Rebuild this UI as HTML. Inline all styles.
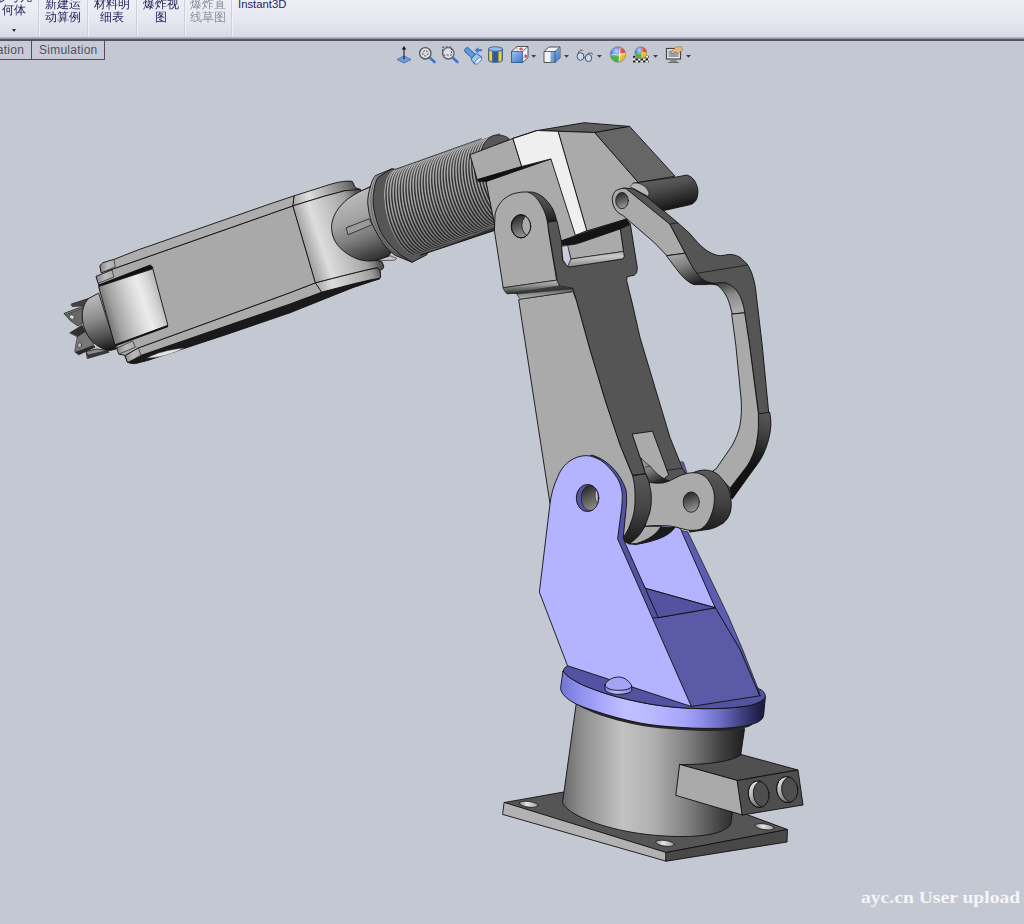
<!DOCTYPE html>
<html><head><meta charset="utf-8">
<style>
html,body{margin:0;padding:0;}
body{width:1024px;height:924px;overflow:hidden;background:#c4c8d3;position:relative;font-family:"Liberation Sans","WenQuanYi Zen Hei","Noto Sans CJK SC",sans-serif;}
#tb{position:absolute;left:0;top:0;width:1024px;height:38px;background:linear-gradient(#eeeff6 0,#e6e7f0 20px,#d9dbe6 36px,#c9cbd6 38px);}
#tbl{position:absolute;left:0;top:37px;width:1024px;height:4px;background:linear-gradient(#c0c2cf 0,#9c9eae 35%,#55576a 62%,#484a5a 85%,#7c7e8e 100%);}
.sep{position:absolute;top:0;width:1px;height:36px;background:#cdcfda;box-shadow:1px 0 0 #f0f1f7;}
.bt{position:absolute;font-size:12px;line-height:13px;color:#25255a;text-align:center;white-space:nowrap;}
.tab{position:absolute;top:41px;height:18.5px;letter-spacing:0.25px;border:1px solid #4e5060;border-top:none;background:#c8cbd7;color:#50525c;font-size:12px;line-height:18.5px;box-sizing:border-box;white-space:nowrap;overflow:hidden;}
#wm{position:absolute;left:860.5px;top:888.5px;font-family:"Liberation Serif",serif;font-weight:bold;font-size:16px;transform-origin:0 0;transform:scaleX(1.225);color:#f4f5f8;white-space:nowrap;line-height:18px;}
svg{position:absolute;left:0;top:0;}
</style></head><body>
<div id="tb"></div><div id="tbl"></div>
<div class="sep" style="left:38px"></div><div class="sep" style="left:87px"></div><div class="sep" style="left:136px"></div><div class="sep" style="left:184px"></div><div class="sep" style="left:231px"></div>
<div class="bt" style="left:-10px;top:-9px;width:48px">参考几<br>何体</div>
<div class="bt" style="left:39px;top:-2px;width:48px">新建运<br>动算例</div>
<div class="bt" style="left:88px;top:-2px;width:48px">材料明<br>细表</div>
<div class="bt" style="left:137px;top:-2px;width:48px">爆炸视<br>图</div>
<div class="bt" style="left:184px;top:-2px;width:48px;color:#8e9099">爆炸直<br>线草图</div>
<div class="bt" style="left:238px;top:-2.5px;font-size:11.3px">Instant3D</div>
<div style="position:absolute;left:12px;top:29px;width:0;height:0;border-left:2.5px solid transparent;border-right:2.5px solid transparent;border-top:3px solid #25255a"></div>
<div class="tab" style="left:-20px;width:52px;padding-left:6px">ulation</div>
<div class="tab" style="left:31px;width:74px;padding-left:7px">Simulation</div>
<svg id="robot" width="1024" height="924" viewBox="0 0 1024 924">
<defs>
<linearGradient id="gcyl" gradientUnits="userSpaceOnUse" x1="562" y1="0" x2="745" y2="0">
<stop offset="0" stop-color="#666"/><stop offset="0.1" stop-color="#8c8c8c"/><stop offset="0.33" stop-color="#c2c2c2"/><stop offset="0.5" stop-color="#b0b0b0"/><stop offset="0.7" stop-color="#7c7c7c"/><stop offset="0.86" stop-color="#444"/><stop offset="1" stop-color="#1c1c1c"/>
</linearGradient>
<linearGradient id="gflange" gradientUnits="userSpaceOnUse" x1="560" y1="0" x2="766" y2="0">
<stop offset="0" stop-color="#7272d4"/><stop offset="0.1" stop-color="#9090f0"/><stop offset="0.2" stop-color="#a8a8fc"/><stop offset="0.32" stop-color="#c0c0ff"/><stop offset="0.45" stop-color="#b8b8ff"/><stop offset="0.6" stop-color="#a6a6fa"/><stop offset="0.68" stop-color="#9090ec"/><stop offset="0.79" stop-color="#6868be"/><stop offset="0.88" stop-color="#404082"/><stop offset="0.97" stop-color="#1e1e48"/><stop offset="1" stop-color="#1a1a40"/>
</linearGradient>
<linearGradient id="ghole" x1="0.2" y1="0" x2="0.6" y2="1"><stop offset="0" stop-color="#222"/><stop offset="0.45" stop-color="#555"/><stop offset="1" stop-color="#8c8c8c"/></linearGradient>
<linearGradient id="gflange2" x1="0" y1="0" x2="1" y2="0"><stop offset="0" stop-color="#7a7ad8"/><stop offset="0.4" stop-color="#c2c2ff"/><stop offset="1" stop-color="#8080dd"/></linearGradient>
<linearGradient id="gph" x1="0" y1="0" x2="1" y2="0"><stop offset="0" stop-color="#8a8a8a"/><stop offset="0.4" stop-color="#e4e4e4"/><stop offset="1" stop-color="#a0a0a0"/></linearGradient>
<linearGradient id="gcres" x1="0" y1="0" x2="0" y2="1"><stop offset="0" stop-color="#e0e0e0"/><stop offset="0.5" stop-color="#b8b8b8"/><stop offset="1" stop-color="#6a6a6a"/></linearGradient>
<clipPath id="cbh1"><ellipse cx="758.6" cy="794.2" rx="10.3" ry="13.4" transform="rotate(-8 758.6 794.2)"/></clipPath>
<clipPath id="cbh2"><ellipse cx="787.2" cy="789.6" rx="10.6" ry="13.1" transform="rotate(-8 787.2 789.6)"/></clipPath>
</defs>
<g stroke="#111" stroke-width="0.9" stroke-linejoin="round" stroke-linecap="round">
<!-- base plate -->
<polygon points="504.5,802.5 575,790 740,812 787.5,829.5 666.2,852.5" fill="#555"/>
<polygon points="504.5,802.5 666.2,852.5 666.2,861.2 503,814.5" fill="#b2b2b2"/>
<polygon points="666.2,852.5 787.5,829.5 787,842 666.2,861.2" fill="#484848"/>
<!-- holes -->
<g stroke-width="0.7"><ellipse cx="528.7" cy="804.3" rx="9.5" ry="2.8" fill="url(#gph)" transform="rotate(8 528.7 804.3)"/><ellipse cx="665" cy="843.3" rx="9.5" ry="2.8" fill="url(#gph)" transform="rotate(8 665 843.3)"/><ellipse cx="764.6" cy="826.8" rx="9.8" ry="2.8" fill="url(#gph)" transform="rotate(9 764.6 826.8)"/></g>
<!-- cylinder -->
<path d="M576.3,703 L562.5,802.5 C566,812 590,824 625,831 C660,838 700,838 716,833 C726,830 731,826 731,822 L744.5,729 Z" fill="url(#gcyl)"/>
<!-- connector box -->
<path d="M680,764.5 L737.5,780.5 L798,770 L741.2,754.5 C735,760 712,765 680,764.5 Z" fill="#505050"/>
<polygon points="680,764.5 737.5,780.5 742.5,815 676.2,795.5" fill="#aaa"/>
<polygon points="737.5,780.5 798,770 803,805 742.5,815" fill="#4e4e4e"/>
<ellipse cx="758.6" cy="794.2" rx="10.3" ry="13.4" transform="rotate(-8 758.6 794.2)" fill="url(#gcres)" stroke-width="0.8"/>
<g clip-path="url(#cbh1)"><ellipse cx="763.6" cy="794" rx="10.3" ry="13.4" transform="rotate(-8 763.6 794)" fill="#4e4e4e" stroke-width="0.8"/></g>
<ellipse cx="787.2" cy="789.6" rx="10.6" ry="13.1" transform="rotate(-8 787.2 789.6)" fill="url(#gcres)" stroke-width="0.8"/>
<g clip-path="url(#cbh2)"><ellipse cx="792.2" cy="789.4" rx="10.6" ry="13.1" transform="rotate(-8 792.2 789.4)" fill="#4e4e4e" stroke-width="0.8"/></g>
<ellipse cx="758.6" cy="794.2" rx="10.3" ry="13.4" transform="rotate(-8 758.6 794.2)" fill="none" stroke-width="0.8"/>
<ellipse cx="787.2" cy="789.6" rx="10.6" ry="13.1" transform="rotate(-8 787.2 789.6)" fill="none" stroke-width="0.8"/>
</g>

<g stroke="#111" stroke-width="0.9" stroke-linejoin="round" stroke-linecap="round">
<!-- dark ring under flange -->
<path d="M570,700 C585,712 615,721 642.8,726 C665,729.5 691,731 716.5,731 C735,730.5 748,728 752,725 L752,718 L570,692 Z" fill="#262626" stroke="none"/>
<!-- flange rim -->
<path d="M563.2,671.3 C566,675 569.5,677.8 573.8,680.1 C579,683.5 585,686.3 592.6,688.9 C600,691.8 608,694.5 617.7,697 C626,699.2 634,701 642.8,702.7 C651,704.3 659,705.5 667.9,706.5 C676,707.5 683,708 691.4,708.3 C702,708.8 712,708.8 722.7,708.3 C732,707.8 740,707 747.8,705.8 C753,704.8 757,703.3 760.4,701.4 C763,700 764.5,698.5 765.4,697 L764.1,710.2 C764,713 763.7,715.5 762.9,717.8 C761.5,719.6 760,721 757.9,722.1 C753,724.3 748,725.6 741.6,726.5 C733,727.8 725,728.3 716.5,728.4 C708,728.5 700,728.4 691.4,728 C682,727.5 674,727 665,726.3 C657,725.5 650,724.7 642.8,723.5 C634,722 626,720 617.7,717.8 C609,715.5 601,713 592.6,710.2 C587,708.3 581,706.3 576.3,704 C571,701.5 567,698.5 563.8,695.2 C562,693 561,691 560.6,688.9 Z" fill="url(#gflange)"/>
<!-- flange top -->
<path d="M563.2,671.3 C563.5,669 565,667 567.5,665.7 L700,640 L759.1,688.9 C762,690 763.5,691.3 764.1,692.7 C765,694 765.5,695.5 765.4,697 C764.5,698.5 763,700 760.4,701.4 C757,703.3 753,704.8 747.8,705.8 C740,707 732,707.8 722.7,708.3 C712,708.8 702,708.8 691.4,708.3 C683,708 676,707.5 667.9,706.5 C659,705.5 651,704.3 642.8,702.7 C634,701 626,699.2 617.7,697 C608,694.5 600,691.8 592.6,688.9 C585,686.3 579,683.5 573.8,680.1 C569.5,677.8 566,675 563.2,671.3 Z" fill="#5353a2"/>
<!-- far plate interior -->
<polygon points="618,538 640,480 681.6,530.7 715.4,607.8 645.8,588.4" fill="#b3b3ff"/>
<!-- far plate edge strip -->
<polygon points="681.6,530.7 687.8,531.9 728,615.4 742.8,650 757.9,688.3 760.5,696 759.7,695.8 740.3,650 715.4,607.8" fill="#5c5cb0" stroke-width="0.7"/>
<!-- right face -->
<polygon points="640,590 658.3,617.6 715.4,607.8 740.3,650 759.7,695.8 691.4,706.5 650,630" fill="#5a5aa6"/>
<!-- triangular pocket -->
<polygon points="645.8,588.4 715.4,607.8 658.3,617.6" fill="#5353a2"/>
</g>

<defs>
<linearGradient id="gwrist" gradientUnits="userSpaceOnUse" x1="98.9" y1="286.4" x2="152.8" y2="268.8">
<stop offset="0" stop-color="#7e7e7e"/><stop offset="0.12" stop-color="#a0a0a0"/><stop offset="0.35" stop-color="#c4c4c4"/><stop offset="0.52" stop-color="#dcdcdc"/><stop offset="0.67" stop-color="#ececec"/><stop offset="0.85" stop-color="#d4d4d4"/><stop offset="1" stop-color="#b4b4b4"/>
</linearGradient>
<linearGradient id="gboss" gradientUnits="userSpaceOnUse" x1="293" y1="206" x2="372" y2="180">
<stop offset="0" stop-color="#a6a6a6"/><stop offset="0.18" stop-color="#dedede"/><stop offset="0.35" stop-color="#c8c8c8"/><stop offset="0.52" stop-color="#b2b2b2"/><stop offset="0.62" stop-color="#a2a2a2"/><stop offset="0.7" stop-color="#808080"/><stop offset="0.77" stop-color="#555"/><stop offset="0.86" stop-color="#444"/><stop offset="1" stop-color="#333"/>
</linearGradient>
<linearGradient id="gbossb" gradientUnits="userSpaceOnUse" x1="316" y1="284" x2="395" y2="258">
<stop offset="0" stop-color="#a6a6a6"/><stop offset="0.18" stop-color="#dedede"/><stop offset="0.35" stop-color="#c8c8c8"/><stop offset="0.55" stop-color="#b2b2b2"/><stop offset="0.68" stop-color="#9a9a9a"/><stop offset="0.76" stop-color="#6a6a6a"/><stop offset="0.83" stop-color="#333"/><stop offset="1" stop-color="#222"/>
</linearGradient>
<linearGradient id="gneck" gradientUnits="userSpaceOnUse" x1="345" y1="195" x2="372" y2="262">
<stop offset="0" stop-color="#bcbcbc"/><stop offset="0.35" stop-color="#a4a4a4"/><stop offset="0.65" stop-color="#787878"/><stop offset="1" stop-color="#2e2e2e"/>
</linearGradient>
<linearGradient id="gcone" gradientUnits="userSpaceOnUse" x1="90" y1="298" x2="105" y2="350">
<stop offset="0" stop-color="#b8b8b8"/><stop offset="0.4" stop-color="#8c8c8c"/><stop offset="0.75" stop-color="#505050"/><stop offset="1" stop-color="#1c1c1c"/>
</linearGradient>
<linearGradient id="gbosst" gradientUnits="userSpaceOnUse" x1="293" y1="206" x2="372" y2="180">
<stop offset="0" stop-color="#a6a6a6"/><stop offset="0.22" stop-color="#e0e0e0"/><stop offset="0.45" stop-color="#aaa"/><stop offset="0.68" stop-color="#777"/><stop offset="0.78" stop-color="#555"/><stop offset="1" stop-color="#444"/>
</linearGradient>
<linearGradient id="gcap" x1="0" y1="0" x2="1" y2="0"><stop offset="0" stop-color="#888"/><stop offset="0.5" stop-color="#bbb"/><stop offset="1" stop-color="#aaa"/></linearGradient>
</defs>
<g stroke="#111" stroke-width="0.9" stroke-linejoin="round" stroke-linecap="round">
<!-- gripper bits -->
<polygon points="71.3,304 88.9,298.3 90,300.8 85,305.8 72.5,306.5" fill="#444" stroke-width="0.6"/>
<polygon points="64.4,313.4 82.6,306.5 83.8,309 82,324 77.6,325.9 70,320.3" fill="#686868" stroke-width="0.6"/>
<polygon points="64.4,313.4 82.6,306.5 83.2,308 65.6,314.7" fill="#8c8c8c" stroke-width="0.5"/>
<ellipse cx="71.9" cy="317.1" rx="2.6" ry="2" fill="#ddd" stroke-width="0.5" transform="rotate(30 71.9 317.1)"/>
<polygon points="70,332.8 82,325.3 85.1,331.5 77.6,336.6" fill="#303030" stroke-width="0.6"/>
<polygon points="77.6,336.6 85.1,331.5 93.9,344.1 78.8,354.1 75,351.6" fill="#777" stroke-width="0.6"/>
<ellipse cx="79.6" cy="345.2" rx="2" ry="2.4" fill="#bbb" stroke-width="0.5"/>
<polygon points="75.7,352.3 93.9,345.4 95,347.2 79,354.8" fill="#2a2a2a" stroke-width="0.5"/>
<polygon points="86.3,351.6 96.4,349.1 107.7,350.4 109,352.3 87.6,358.5" fill="#3a3a3a" stroke-width="0.6"/>
<polygon points="86.3,351.6 96.4,349.1 107.7,350.4 88,355" fill="#8a8a8a" stroke-width="0.5"/>
<!-- cone -->
<path d="M98.3,293.3 L88.9,298.3 C86,301 84.5,304 83.8,306.5 C82,311 82,316 82.6,320.3 C83,325 84.5,329 86.3,332.8 C88,336.5 91,340 93.9,342.8 C96,345 99,347 101.4,347.9 C104,349.5 107,350.3 110.2,350.4 L116,349 Z" fill="url(#gcone)"/>
<!-- bottom black face -->
<path d="M127.8,362.3 C130,363.5 133,363.8 135.3,363.6 L147.8,360.4 L225,335 L290,312.8 L327.6,297.7 L352.7,287.7 L371.5,281.4 L379.7,278.9 L379.7,270 L317.5,283.7 L140.9,355.4 L125.2,355.4 Z" fill="#1a1a1a"/>
<path d="M147.5,358 C152,354.5 170,349 183.5,348.2 C175,353 158,358 147.5,358 Z" fill="#e4e4e4" stroke="#555" stroke-width="0.4"/>
<!-- bottom plate side strip -->
<path d="M125.2,355.4 L127.8,362.3 L140.9,355.4 L290,304 L322,292.1 L352.7,284 L371.5,279.6 L379.7,278.3 L380.6,276.4 L379.7,270.4 L382.8,266.4 L377.8,267.6 L365.3,270.2 L340.2,276.4 L315.7,282.7 L290,292.7 L140.3,347.2 L138.4,347.9 Z" fill="#ababab"/>
<path d="M315.7,282.7 L340.2,276.4 L365.3,270.2 L377.8,267.6 L379.7,270.4 L380.6,276.4 L379.7,278.3 L371.5,279.6 L352.7,284 L322,292.1 Z" fill="url(#gbossb)"/>
<path d="M125.2,355.4 L138.4,347.9 L140.9,355.4 L127.8,362.3 Z" fill="url(#gcap)" stroke-width="0.6"/>
<!-- main front face -->
<path d="M96.4,276.3 L112,270 L113.7,268.7 L293.2,205.8 L315.7,282.7 L290,292.7 L140.3,347.2 L138.4,347.9 L125.2,355.4 L119,354.1 L117.1,347.9 L98.3,283.2 Z" fill="#a9a9a9"/>
<!-- top plate side -->
<path d="M100.2,265.7 C101,264 102.5,263 103.9,262.5 L114,259.4 L137.8,250 L270,203.9 L294.5,195.7 L293.2,205.8 L270,213.9 L113.7,268.7 L101.6,272.6 Z" fill="#adadad"/>
<path d="M100.2,265.7 C101,264 102.5,263 103.9,262.5 L114,259.4 L115.2,267 L101.6,272.6 Z" fill="url(#gcap)" stroke-width="0.6"/>
<path d="M96.4,276.3 L112,270 L113.9,277 L98.3,283.2 Z" fill="url(#gcap)" stroke-width="0.6"/>
<path d="M117.1,347.9 L132.8,341 L135.3,347.2 L119,354.1 Z" fill="url(#gcap)" stroke-width="0.6"/>
<!-- boss top rim -->
<path d="M294.5,195.7 L320.2,187.6 C328,185 334,183 340.3,181.9 C345,181 349,181 352.2,181.3 L355.3,187.6 L360.3,189.4 L362.2,192.6 L345.3,190.7 L324,196.3 L293.2,205.8 Z" fill="url(#gbosst)"/>
<!-- boss body -->
<path d="M293.2,205.8 L324,196.3 L345.3,190.7 L360.3,189.4 L362.2,192.6 L377.8,260.7 L382.2,262 L383.8,266.4 L382.8,268.9 L379.7,270.4 L377.8,267.6 L365.3,270.2 L340.2,276.4 L315.7,282.7 Z" fill="url(#gboss)"/>
<!-- wrist roller -->
<path d="M98.5,284.6 L150.3,264.4 L153.6,267.8 L152.8,268.8 L98.9,286.4 Z" fill="#111" stroke="none"/>
<path d="M98.9,286.4 L152.8,268.8 L167.9,325.3 L115.2,344.7 Z" fill="url(#gwrist)"/>
<path d="M115.2,344.7 L167.9,325.3 L168.2,326.9 L115.7,346.2 Z" fill="#111" stroke="none"/>
<!-- light slivers behind neck -->
<polygon points="361.6,190.7 370.4,186.3 369.5,191.5" fill="#c8c8c8" stroke-width="0.6"/>
<polygon points="376,260.5 390.2,255.8 396.5,258.3 395.2,259.9" fill="#c4c4c4" stroke-width="0.6"/>
<!-- neck -->
<path d="M370.4,187 L361.6,190.7 C356,193.5 352,196 347.8,198.9 C343,203 339,207 336.5,211.4 C333.5,216 332,221 331.5,226.5 C331.5,231 332.5,235 334,239 C336,243.5 339,247 342.8,250.3 C347,254 352,257 357.8,259.1 C362,260.5 366,261 370.4,261 C373,260.8 375.5,260.5 378.9,259.5 L389,255.8 L392,250 L380,225 L374,190 Z" fill="url(#gneck)"/>
<polygon points="346.5,227.7 369.1,218.9 372.3,224.6 348.4,234.6" fill="#9a9a9a" stroke-width="0.7"/>
</g>

<defs>
<clipPath id="cthread"><path d="M394.7,169.6 L393.2,170.3 L391.8,171.2 L390.5,172.4 L389.3,173.8 L388.2,175.5 L387.2,177.4 L386.4,179.6 L385.6,181.9 L385.1,184.4 L384.6,187.1 L384.3,189.9 L384.1,192.9 L384.0,196.0 L384.2,199.2 L384.4,202.5 L384.8,205.9 L385.3,209.2 L386.0,212.7 L386.7,216.1 L387.6,219.5 L388.7,222.8 L389.8,226.1 L391.1,229.3 L392.4,232.4 L393.8,235.3 L395.4,238.2 L397.0,240.8 L398.6,243.3 L400.3,245.6 L402.1,247.8 L403.8,249.6 L405.6,251.3 L407.4,252.7 L409.2,253.9 L411.0,254.8 L412.8,255.4 L414.5,255.8 L416.2,256.0 L417.8,255.8 L419.4,255.4 L500,228.6 L500,133.3 Z"/></clipPath>
<linearGradient id="gthr" gradientUnits="userSpaceOnUse" x1="430" y1="160" x2="458" y2="245"><stop offset="0" stop-color="#fff" stop-opacity="0.14"/><stop offset="0.3" stop-color="#fff" stop-opacity="0"/><stop offset="0.45" stop-color="#000" stop-opacity="0.03"/><stop offset="0.8" stop-color="#000" stop-opacity="0.26"/><stop offset="1" stop-color="#000" stop-opacity="0.4"/></linearGradient>
<linearGradient id="gpin" gradientUnits="userSpaceOnUse" x1="660" y1="178" x2="668" y2="210"><stop offset="0" stop-color="#606060"/><stop offset="0.35" stop-color="#4c4c4c"/><stop offset="0.7" stop-color="#2e2e2e"/><stop offset="1" stop-color="#151515"/></linearGradient>
<linearGradient id="gcollar" gradientUnits="userSpaceOnUse" x1="380" y1="170" x2="395" y2="260"><stop offset="0" stop-color="#b0b0b0"/><stop offset="0.5" stop-color="#8e8e8e"/><stop offset="1" stop-color="#606060"/></linearGradient>
</defs>
<g stroke="#111" stroke-width="0.9" stroke-linejoin="round" stroke-linecap="round">
<path d="M391.5,169 L375.2,175.7 C372,180 371,184 370.2,187.6 C368.5,193 367.7,198 367.7,202.7 C368,207 368.7,211 369.6,215.2 C370.7,220 372,224 374,227.8 C376.5,233 379.5,238 382.7,242.8 C386,247.5 390,252 395.3,255.4 L412,262.2 L413,261 C400,254 390,243 384,230 C378,217 375,200 378,187 C380,180 386,173 394,169.5 Z" fill="url(#gcollar)"/>
<path d="M395.3,169.4 L391.5,169 L377.7,177.6 C375.5,182 374.5,186 374,190 C373,195 373,200 373.3,205.2 C373.8,210 375,215 376.5,220.2 C378,225.5 380,230.5 382.7,235.3 C386,240.5 389.5,245 394,249 C397.5,252.5 401,255.5 405.3,257.9 L412.2,262.3 L427,254.6 L430,240 L410,170 Z" fill="#565656"/>
<path d="M389.5,170 L376.5,176.6 C373,183 371.5,190 371,196 C370.5,206 372,216 375.5,225 C379,234 385,244 392,251 L406,259.5" fill="none" stroke-width="0.5" stroke="#333"/>
<rect x="370" y="120" width="140" height="150" fill="#484848" stroke="none" clip-path="url(#cthread)"/>
<g clip-path="url(#cthread)" fill="none">
<path d="M392.4,170.3 L390.9,171.0 L389.5,172.0 L388.2,173.2 L387.0,174.6 L385.9,176.3 L384.9,178.2 L384.1,180.3 L383.4,182.6 L382.8,185.2 L382.3,187.9 L382.0,190.7 L381.8,193.7 L381.8,196.8 L381.9,200.0 L382.1,203.3 L382.5,206.7 L383.0,210.0 L383.7,213.5 L384.4,216.9 L385.4,220.3 L386.4,223.6 L387.5,226.9 L388.8,230.1 L390.1,233.2 L391.6,236.2 L393.1,239.0 L394.7,241.7 L396.3,244.2 L398.0,246.5 L399.8,248.6 L401.6,250.5 L403.4,252.2 L405.2,253.6 L407.0,254.8 L408.8,255.7 L410.5,256.3 L412.3,256.7 L414.0,256.8 L415.6,256.7 L417.1,256.3" stroke="#a6a6a6" stroke-width="1.45"/>
<path d="M393.8,169.9 L392.3,170.5 L390.9,171.5 L389.6,172.7 L388.4,174.1 L387.3,175.8 L386.3,177.7 L385.4,179.8 L384.7,182.2 L384.1,184.7 L383.7,187.4 L383.3,190.2 L383.2,193.2 L383.1,196.3 L383.2,199.5 L383.5,202.8 L383.8,206.2 L384.4,209.6 L385.0,213.0 L385.8,216.4 L386.7,219.8 L387.8,223.1 L388.9,226.4 L390.1,229.6 L391.5,232.7 L392.9,235.7 L394.5,238.5 L396.0,241.2 L397.7,243.7 L399.4,246.0 L401.2,248.1 L402.9,250.0 L404.7,251.7 L406.5,253.1 L408.3,254.3 L410.1,255.2 L411.9,255.8 L413.6,256.2 L415.3,256.3 L416.9,256.2 L418.5,255.8" stroke="#161616" stroke-width="0.55"/>
<path d="M395.2,169.4 L393.8,170.1 L392.4,171.0 L391.1,172.2 L389.9,173.6 L388.8,175.3 L387.8,177.2 L386.9,179.4 L386.2,181.7 L385.6,184.2 L385.2,186.9 L384.8,189.7 L384.7,192.7 L384.6,195.8 L384.7,199.0 L385.0,202.3 L385.3,205.7 L385.9,209.0 L386.5,212.5 L387.3,215.9 L388.2,219.2 L389.2,222.6 L390.4,225.9 L391.6,229.1 L393.0,232.2 L394.4,235.1 L395.9,238.0 L397.5,240.6 L399.2,243.1 L400.9,245.4 L402.6,247.5 L404.4,249.4 L406.2,251.1 L408.0,252.5 L409.8,253.7 L411.6,254.6 L413.4,255.2 L415.1,255.6 L416.8,255.8 L418.4,255.6 L420.0,255.2" stroke="#a6a6a6" stroke-width="1.45"/>
<path d="M396.6,168.9 L395.1,169.6 L393.7,170.5 L392.4,171.7 L391.2,173.2 L390.1,174.8 L389.2,176.7 L388.3,178.9 L387.6,181.2 L387.0,183.7 L386.5,186.4 L386.2,189.2 L386.0,192.2 L386.0,195.3 L386.1,198.5 L386.3,201.8 L386.7,205.2 L387.2,208.6 L387.9,212.0 L388.7,215.4 L389.6,218.8 L390.6,222.1 L391.7,225.4 L393.0,228.6 L394.3,231.7 L395.8,234.6 L397.3,237.5 L398.9,240.2 L400.5,242.6 L402.2,245.0 L404.0,247.1 L405.8,248.9 L407.6,250.6 L409.4,252.0 L411.2,253.2 L413.0,254.1 L414.7,254.8 L416.4,255.1 L418.1,255.3 L419.8,255.1 L421.3,254.7" stroke="#161616" stroke-width="0.55"/>
<path d="M398.1,168.5 L396.6,169.1 L395.2,170.1 L393.9,171.3 L392.7,172.7 L391.6,174.4 L390.6,176.3 L389.8,178.4 L389.1,180.7 L388.5,183.2 L388.0,185.9 L387.7,188.7 L387.5,191.7 L387.5,194.8 L387.6,198.0 L387.8,201.3 L388.2,204.6 L388.7,208.0 L389.4,211.4 L390.2,214.8 L391.1,218.2 L392.1,221.6 L393.2,224.8 L394.5,228.0 L395.8,231.1 L397.3,234.1 L398.8,236.9 L400.4,239.6 L402.0,242.1 L403.7,244.4 L405.5,246.5 L407.2,248.4 L409.0,250.0 L410.8,251.4 L412.6,252.6 L414.4,253.5 L416.2,254.2 L417.9,254.6 L419.6,254.7 L421.2,254.5 L422.8,254.1" stroke="#a6a6a6" stroke-width="1.45"/>
<path d="M399.5,168.0 L398.0,168.6 L396.6,169.6 L395.3,170.8 L394.1,172.2 L393.0,173.9 L392.0,175.8 L391.2,177.9 L390.4,180.2 L389.8,182.7 L389.4,185.4 L389.1,188.3 L388.9,191.2 L388.8,194.3 L388.9,197.5 L389.2,200.8 L389.6,204.2 L390.1,207.5 L390.7,211.0 L391.5,214.4 L392.4,217.7 L393.5,221.1 L394.6,224.4 L395.8,227.5 L397.2,230.6 L398.6,233.6 L400.1,236.4 L401.7,239.1 L403.4,241.6 L405.1,243.9 L406.8,246.0 L408.6,247.9 L410.4,249.5 L412.2,250.9 L414.0,252.1 L415.8,253.0 L417.5,253.7 L419.3,254.1 L420.9,254.2 L422.6,254.0 L424.1,253.6" stroke="#161616" stroke-width="0.55"/>
<path d="M400.9,167.5 L399.5,168.2 L398.1,169.1 L396.8,170.3 L395.6,171.7 L394.5,173.4 L393.5,175.3 L392.6,177.4 L391.9,179.7 L391.3,182.3 L390.9,184.9 L390.6,187.8 L390.4,190.7 L390.3,193.8 L390.4,197.0 L390.7,200.3 L391.1,203.6 L391.6,207.0 L392.2,210.4 L393.0,213.8 L393.9,217.2 L394.9,220.5 L396.1,223.8 L397.3,227.0 L398.7,230.1 L400.1,233.0 L401.6,235.9 L403.2,238.5 L404.8,241.0 L406.5,243.3 L408.3,245.4 L410.1,247.3 L411.8,249.0 L413.6,250.4 L415.4,251.5 L417.2,252.4 L419.0,253.1 L420.7,253.5 L422.4,253.6 L424.0,253.5 L425.6,253.0" stroke="#a6a6a6" stroke-width="1.45"/>
<path d="M402.3,167.0 L400.8,167.7 L399.4,168.6 L398.1,169.8 L396.9,171.2 L395.8,172.9 L394.9,174.8 L394.0,176.9 L393.3,179.3 L392.7,181.8 L392.2,184.4 L391.9,187.3 L391.7,190.3 L391.7,193.3 L391.8,196.5 L392.0,199.8 L392.4,203.2 L392.9,206.5 L393.6,209.9 L394.4,213.3 L395.3,216.7 L396.3,220.0 L397.4,223.3 L398.7,226.5 L400.0,229.6 L401.5,232.6 L403.0,235.4 L404.6,238.0 L406.2,240.5 L407.9,242.8 L409.6,244.9 L411.4,246.8 L413.2,248.5 L415.0,249.9 L416.8,251.0 L418.6,252.0 L420.3,252.6 L422.1,253.0 L423.7,253.1 L425.4,253.0 L426.9,252.6" stroke="#161616" stroke-width="0.55"/>
<path d="M403.8,166.6 L402.3,167.2 L400.9,168.2 L399.6,169.4 L398.4,170.8 L397.3,172.5 L396.4,174.4 L395.5,176.5 L394.8,178.8 L394.2,181.3 L393.7,184.0 L393.4,186.8 L393.2,189.8 L393.2,192.8 L393.3,196.0 L393.5,199.3 L393.9,202.6 L394.4,206.0 L395.1,209.4 L395.9,212.8 L396.8,216.2 L397.8,219.5 L398.9,222.8 L400.2,226.0 L401.5,229.0 L402.9,232.0 L404.5,234.8 L406.0,237.5 L407.7,240.0 L409.4,242.3 L411.1,244.4 L412.9,246.2 L414.7,247.9 L416.5,249.3 L418.3,250.5 L420.0,251.4 L421.8,252.0 L423.5,252.4 L425.2,252.5 L426.8,252.4 L428.4,252.0" stroke="#a6a6a6" stroke-width="1.45"/>
<path d="M405.1,166.1 L403.7,166.7 L402.3,167.7 L401.0,168.9 L399.8,170.3 L398.7,172.0 L397.7,173.9 L396.9,176.0 L396.1,178.3 L395.6,180.8 L395.1,183.5 L394.8,186.3 L394.6,189.3 L394.6,192.4 L394.7,195.5 L394.9,198.8 L395.3,202.2 L395.8,205.5 L396.4,208.9 L397.2,212.3 L398.1,215.7 L399.2,219.0 L400.3,222.3 L401.5,225.5 L402.9,228.6 L404.3,231.5 L405.8,234.3 L407.4,237.0 L409.0,239.5 L410.7,241.8 L412.5,243.9 L414.2,245.7 L416.0,247.4 L417.8,248.8 L419.6,250.0 L421.4,250.9 L423.2,251.5 L424.9,251.9 L426.6,252.0 L428.2,251.9 L429.7,251.5" stroke="#161616" stroke-width="0.55"/>
<path d="M406.6,165.6 L405.1,166.3 L403.8,167.2 L402.5,168.4 L401.3,169.8 L400.2,171.5 L399.2,173.4 L398.4,175.5 L397.6,177.8 L397.0,180.3 L396.6,183.0 L396.3,185.8 L396.1,188.8 L396.0,191.9 L396.1,195.0 L396.4,198.3 L396.8,201.6 L397.3,205.0 L397.9,208.4 L398.7,211.8 L399.6,215.2 L400.6,218.5 L401.8,221.7 L403.0,224.9 L404.4,228.0 L405.8,231.0 L407.3,233.8 L408.9,236.4 L410.5,238.9 L412.2,241.2 L413.9,243.3 L415.7,245.2 L417.5,246.8 L419.3,248.2 L421.1,249.4 L422.9,250.3 L424.6,250.9 L426.3,251.3 L428.0,251.5 L429.6,251.3 L431.2,250.9" stroke="#a6a6a6" stroke-width="1.45"/>
<path d="M408.0,165.1 L406.5,165.8 L405.1,166.7 L403.8,167.9 L402.6,169.3 L401.5,171.0 L400.6,172.9 L399.7,175.0 L399.0,177.3 L398.4,179.8 L398.0,182.5 L397.6,185.3 L397.5,188.3 L397.4,191.4 L397.5,194.6 L397.8,197.8 L398.1,201.2 L398.7,204.5 L399.3,207.9 L400.1,211.3 L401.0,214.7 L402.0,218.0 L403.1,221.3 L404.4,224.4 L405.7,227.5 L407.2,230.5 L408.7,233.3 L410.2,235.9 L411.9,238.4 L413.6,240.7 L415.3,242.8 L417.1,244.7 L418.9,246.3 L420.7,247.7 L422.4,248.9 L424.2,249.8 L426.0,250.5 L427.7,250.8 L429.4,251.0 L431.0,250.8 L432.5,250.4" stroke="#161616" stroke-width="0.55"/>
<path d="M409.5,164.7 L408.0,165.3 L406.6,166.3 L405.3,167.4 L404.1,168.9 L403.0,170.5 L402.1,172.4 L401.2,174.5 L400.5,176.8 L399.9,179.3 L399.4,182.0 L399.1,184.8 L398.9,187.8 L398.9,190.9 L399.0,194.1 L399.2,197.3 L399.6,200.6 L400.1,204.0 L400.8,207.4 L401.6,210.8 L402.5,214.1 L403.5,217.5 L404.6,220.7 L405.9,223.9 L407.2,227.0 L408.6,229.9 L410.1,232.7 L411.7,235.4 L413.4,237.8 L415.0,240.1 L416.8,242.2 L418.5,244.1 L420.3,245.7 L422.1,247.1 L423.9,248.3 L425.7,249.2 L427.4,249.9 L429.1,250.3 L430.8,250.4 L432.4,250.2 L434.0,249.8" stroke="#a6a6a6" stroke-width="1.45"/>
<path d="M410.8,164.2 L409.4,164.8 L408.0,165.8 L406.7,167.0 L405.5,168.4 L404.4,170.1 L403.4,171.9 L402.6,174.1 L401.9,176.4 L401.3,178.9 L400.8,181.5 L400.5,184.3 L400.3,187.3 L400.3,190.4 L400.4,193.6 L400.6,196.8 L401.0,200.2 L401.5,203.5 L402.2,206.9 L402.9,210.3 L403.8,213.6 L404.9,217.0 L406.0,220.2 L407.2,223.4 L408.6,226.5 L410.0,229.4 L411.5,232.2 L413.1,234.9 L414.7,237.4 L416.4,239.6 L418.1,241.7 L419.9,243.6 L421.7,245.3 L423.5,246.7 L425.3,247.8 L427.0,248.7 L428.8,249.4 L430.5,249.8 L432.2,249.9 L433.8,249.7 L435.3,249.3" stroke="#161616" stroke-width="0.55"/>
<path d="M412.3,163.7 L410.8,164.4 L409.4,165.3 L408.2,166.5 L407.0,167.9 L405.9,169.6 L404.9,171.5 L404.1,173.6 L403.3,175.9 L402.8,178.4 L402.3,181.0 L402.0,183.9 L401.8,186.8 L401.8,189.9 L401.9,193.1 L402.1,196.3 L402.5,199.6 L403.0,203.0 L403.6,206.4 L404.4,209.8 L405.3,213.1 L406.3,216.4 L407.5,219.7 L408.7,222.8 L410.0,225.9 L411.5,228.9 L413.0,231.7 L414.6,234.3 L416.2,236.8 L417.9,239.1 L419.6,241.2 L421.4,243.0 L423.1,244.7 L424.9,246.1 L426.7,247.2 L428.5,248.1 L430.2,248.8 L432.0,249.2 L433.6,249.3 L435.2,249.2 L436.8,248.7" stroke="#a6a6a6" stroke-width="1.45"/>
<path d="M413.7,163.2 L412.2,163.9 L410.8,164.8 L409.5,166.0 L408.3,167.4 L407.2,169.1 L406.3,171.0 L405.4,173.1 L404.7,175.4 L404.1,177.9 L403.7,180.5 L403.3,183.4 L403.2,186.3 L403.1,189.4 L403.2,192.6 L403.5,195.8 L403.9,199.2 L404.4,202.5 L405.0,205.9 L405.8,209.3 L406.7,212.6 L407.7,215.9 L408.8,219.2 L410.1,222.4 L411.4,225.4 L412.8,228.4 L414.3,231.2 L415.9,233.8 L417.6,236.3 L419.2,238.6 L421.0,240.7 L422.7,242.5 L424.5,244.2 L426.3,245.6 L428.1,246.7 L429.9,247.7 L431.6,248.3 L433.3,248.7 L435.0,248.8 L436.6,248.7 L438.1,248.3" stroke="#161616" stroke-width="0.55"/>
<path d="M415.1,162.8 L413.7,163.4 L412.3,164.4 L411.0,165.5 L409.8,167.0 L408.7,168.6 L407.8,170.5 L406.9,172.6 L406.2,174.9 L405.6,177.4 L405.2,180.1 L404.8,182.9 L404.7,185.8 L404.6,188.9 L404.7,192.1 L405.0,195.3 L405.3,198.6 L405.9,202.0 L406.5,205.4 L407.3,208.7 L408.2,212.1 L409.2,215.4 L410.3,218.6 L411.6,221.8 L412.9,224.9 L414.3,227.8 L415.8,230.6 L417.4,233.3 L419.0,235.7 L420.7,238.0 L422.4,240.1 L424.2,242.0 L426.0,243.6 L427.8,245.0 L429.5,246.2 L431.3,247.1 L433.1,247.7 L434.8,248.1 L436.4,248.2 L438.0,248.1 L439.6,247.7" stroke="#a6a6a6" stroke-width="1.45"/>
<path d="M416.5,162.3 L415.0,162.9 L413.7,163.9 L412.4,165.1 L411.2,166.5 L410.1,168.1 L409.1,170.0 L408.3,172.1 L407.6,174.4 L407.0,176.9 L406.5,179.6 L406.2,182.4 L406.0,185.3 L406.0,188.4 L406.1,191.6 L406.3,194.8 L406.7,198.1 L407.2,201.5 L407.9,204.9 L408.6,208.3 L409.5,211.6 L410.6,214.9 L411.7,218.2 L412.9,221.3 L414.3,224.4 L415.7,227.3 L417.2,230.1 L418.8,232.8 L420.4,235.2 L422.1,237.5 L423.8,239.6 L425.6,241.5 L427.3,243.1 L429.1,244.5 L430.9,245.7 L432.7,246.6 L434.4,247.2 L436.1,247.6 L437.8,247.7 L439.4,247.6 L441.0,247.2" stroke="#161616" stroke-width="0.55"/>
<path d="M418.0,161.8 L416.5,162.5 L415.1,163.4 L413.9,164.6 L412.7,166.0 L411.6,167.7 L410.6,169.6 L409.8,171.7 L409.1,173.9 L408.5,176.4 L408.0,179.1 L407.7,181.9 L407.5,184.8 L407.5,187.9 L407.6,191.1 L407.8,194.3 L408.2,197.6 L408.7,201.0 L409.4,204.4 L410.1,207.7 L411.0,211.1 L412.0,214.4 L413.2,217.6 L414.4,220.8 L415.7,223.8 L417.2,226.8 L418.7,229.6 L420.2,232.2 L421.9,234.7 L423.5,237.0 L425.3,239.0 L427.0,240.9 L428.8,242.5 L430.6,243.9 L432.4,245.1 L434.1,246.0 L435.9,246.6 L437.6,247.0 L439.2,247.1 L440.9,247.0 L442.4,246.6" stroke="#a6a6a6" stroke-width="1.45"/>
<path d="M419.4,161.3 L417.9,162.0 L416.5,162.9 L415.2,164.1 L414.0,165.5 L413.0,167.2 L412.0,169.1 L411.1,171.2 L410.4,173.5 L409.8,175.9 L409.4,178.6 L409.1,181.4 L408.9,184.4 L408.8,187.4 L408.9,190.6 L409.2,193.8 L409.6,197.1 L410.1,200.5 L410.7,203.9 L411.5,207.2 L412.4,210.6 L413.4,213.9 L414.5,217.1 L415.8,220.3 L417.1,223.3 L418.5,226.3 L420.0,229.1 L421.6,231.7 L423.2,234.2 L424.9,236.5 L426.6,238.5 L428.4,240.4 L430.2,242.0 L431.9,243.4 L433.7,244.6 L435.5,245.5 L437.2,246.1 L438.9,246.5 L440.6,246.7 L442.2,246.5 L443.8,246.1" stroke="#161616" stroke-width="0.55"/>
<path d="M420.8,160.9 L419.4,161.5 L418.0,162.5 L416.7,163.6 L415.5,165.1 L414.4,166.7 L413.5,168.6 L412.6,170.7 L411.9,173.0 L411.3,175.5 L410.9,178.1 L410.6,180.9 L410.4,183.9 L410.3,186.9 L410.4,190.1 L410.7,193.3 L411.1,196.6 L411.6,200.0 L412.2,203.3 L413.0,206.7 L413.9,210.0 L414.9,213.3 L416.0,216.6 L417.3,219.7 L418.6,222.8 L420.0,225.7 L421.5,228.5 L423.1,231.1 L424.7,233.6 L426.4,235.9 L428.1,238.0 L429.9,239.8 L431.6,241.5 L433.4,242.9 L435.2,244.0 L437.0,244.9 L438.7,245.6 L440.4,245.9 L442.1,246.1 L443.7,245.9 L445.2,245.5" stroke="#a6a6a6" stroke-width="1.45"/>
<path d="M422.2,160.4 L420.7,161.1 L419.4,162.0 L418.1,163.2 L416.9,164.6 L415.8,166.2 L414.8,168.1 L414.0,170.2 L413.3,172.5 L412.7,175.0 L412.2,177.6 L411.9,180.4 L411.7,183.4 L411.7,186.4 L411.8,189.6 L412.0,192.8 L412.4,196.1 L412.9,199.5 L413.6,202.9 L414.4,206.2 L415.3,209.6 L416.3,212.9 L417.4,216.1 L418.6,219.2 L420.0,222.3 L421.4,225.2 L422.9,228.0 L424.4,230.7 L426.1,233.1 L427.7,235.4 L429.5,237.5 L431.2,239.3 L433.0,241.0 L434.8,242.4 L436.6,243.5 L438.3,244.4 L440.1,245.1 L441.8,245.5 L443.4,245.6 L445.0,245.4 L446.6,245.0" stroke="#161616" stroke-width="0.55"/>
<path d="M423.7,159.9 L422.2,160.6 L420.8,161.5 L419.6,162.7 L418.4,164.1 L417.3,165.8 L416.3,167.6 L415.5,169.7 L414.8,172.0 L414.2,174.5 L413.7,177.1 L413.4,179.9 L413.2,182.9 L413.2,185.9 L413.3,189.1 L413.5,192.3 L413.9,195.6 L414.4,199.0 L415.1,202.3 L415.8,205.7 L416.7,209.0 L417.8,212.3 L418.9,215.6 L420.1,218.7 L421.4,221.7 L422.8,224.7 L424.3,227.5 L425.9,230.1 L427.5,232.6 L429.2,234.8 L430.9,236.9 L432.7,238.8 L434.5,240.4 L436.2,241.8 L438.0,242.9 L439.8,243.8 L441.5,244.5 L443.2,244.9 L444.9,245.0 L446.5,244.8 L448.0,244.4" stroke="#a6a6a6" stroke-width="1.45"/>
<path d="M425.0,159.4 L423.6,160.1 L422.2,161.0 L420.9,162.2 L419.7,163.6 L418.7,165.3 L417.7,167.1 L416.9,169.2 L416.1,171.5 L415.5,174.0 L415.1,176.7 L414.8,179.5 L414.6,182.4 L414.6,185.4 L414.7,188.6 L414.9,191.8 L415.3,195.1 L415.8,198.5 L416.4,201.8 L417.2,205.2 L418.1,208.5 L419.1,211.8 L420.2,215.1 L421.5,218.2 L422.8,221.3 L424.2,224.2 L425.7,227.0 L427.3,229.6 L428.9,232.1 L430.6,234.3 L432.3,236.4 L434.0,238.3 L435.8,239.9 L437.6,241.3 L439.4,242.4 L441.1,243.4 L442.9,244.0 L444.6,244.4 L446.2,244.5 L447.8,244.4 L449.4,243.9" stroke="#161616" stroke-width="0.55"/>
<path d="M426.5,159.0 L425.1,159.6 L423.7,160.6 L422.4,161.7 L421.2,163.2 L420.1,164.8 L419.2,166.7 L418.3,168.8 L417.6,171.1 L417.0,173.5 L416.6,176.2 L416.3,179.0 L416.1,181.9 L416.1,185.0 L416.2,188.1 L416.4,191.3 L416.8,194.6 L417.3,198.0 L417.9,201.3 L418.7,204.7 L419.6,208.0 L420.6,211.3 L421.7,214.5 L423.0,217.7 L424.3,220.7 L425.7,223.6 L427.2,226.4 L428.7,229.0 L430.4,231.5 L432.0,233.8 L433.8,235.8 L435.5,237.7 L437.3,239.3 L439.1,240.7 L440.8,241.9 L442.6,242.8 L444.3,243.4 L446.0,243.8 L447.7,243.9 L449.3,243.8 L450.8,243.4" stroke="#a6a6a6" stroke-width="1.45"/>
<path d="M427.9,158.5 L426.4,159.2 L425.0,160.1 L423.8,161.2 L422.6,162.7 L421.5,164.3 L420.5,166.2 L419.7,168.3 L419.0,170.6 L418.4,173.0 L418.0,175.7 L417.6,178.5 L417.5,181.4 L417.4,184.5 L417.5,187.6 L417.8,190.8 L418.1,194.1 L418.6,197.5 L419.3,200.8 L420.1,204.2 L421.0,207.5 L422.0,210.8 L423.1,214.0 L424.3,217.2 L425.6,220.2 L427.1,223.1 L428.5,225.9 L430.1,228.6 L431.7,231.0 L433.4,233.3 L435.1,235.3 L436.9,237.2 L438.6,238.8 L440.4,240.2 L442.2,241.4 L444.0,242.3 L445.7,242.9 L447.4,243.3 L449.0,243.4 L450.6,243.3 L452.2,242.9" stroke="#161616" stroke-width="0.55"/>
<path d="M429.4,158.0 L427.9,158.7 L426.5,159.6 L425.2,160.8 L424.1,162.2 L423.0,163.8 L422.0,165.7 L421.2,167.8 L420.5,170.1 L419.9,172.6 L419.4,175.2 L419.1,178.0 L419.0,180.9 L418.9,184.0 L419.0,187.1 L419.3,190.3 L419.6,193.6 L420.1,197.0 L420.8,200.3 L421.6,203.7 L422.4,207.0 L423.5,210.3 L424.6,213.5 L425.8,216.6 L427.1,219.7 L428.5,222.6 L430.0,225.4 L431.6,228.0 L433.2,230.4 L434.9,232.7 L436.6,234.8 L438.3,236.6 L440.1,238.2 L441.9,239.6 L443.6,240.8 L445.4,241.7 L447.1,242.3 L448.8,242.7 L450.5,242.8 L452.1,242.7 L453.6,242.3" stroke="#a6a6a6" stroke-width="1.45"/>
<path d="M430.7,157.5 L429.3,158.2 L427.9,159.1 L426.6,160.3 L425.4,161.7 L424.4,163.4 L423.4,165.2 L422.6,167.3 L421.8,169.6 L421.3,172.1 L420.8,174.7 L420.5,177.5 L420.3,180.4 L420.3,183.5 L420.4,186.6 L420.6,189.9 L421.0,193.1 L421.5,196.5 L422.1,199.8 L422.9,203.2 L423.8,206.5 L424.8,209.8 L425.9,213.0 L427.2,216.1 L428.5,219.2 L429.9,222.1 L431.4,224.9 L433.0,227.5 L434.6,230.0 L436.2,232.2 L438.0,234.3 L439.7,236.1 L441.5,237.8 L443.2,239.2 L445.0,240.3 L446.8,241.2 L448.5,241.8 L450.2,242.2 L451.9,242.3 L453.4,242.2 L455.0,241.8" stroke="#161616" stroke-width="0.55"/>
<path d="M432.2,157.1 L430.7,157.7 L429.4,158.7 L428.1,159.8 L426.9,161.2 L425.8,162.9 L424.9,164.8 L424.1,166.8 L423.3,169.1 L422.8,171.6 L422.3,174.2 L422.0,177.0 L421.8,179.9 L421.8,183.0 L421.9,186.1 L422.1,189.3 L422.5,192.6 L423.0,196.0 L423.6,199.3 L424.4,202.6 L425.3,206.0 L426.3,209.2 L427.4,212.5 L428.7,215.6 L430.0,218.6 L431.4,221.5 L432.9,224.3 L434.4,226.9 L436.0,229.4 L437.7,231.6 L439.4,233.7 L441.2,235.6 L442.9,237.2 L444.7,238.6 L446.5,239.7 L448.2,240.6 L450.0,241.3 L451.6,241.6 L453.3,241.8 L454.9,241.6 L456.4,241.2" stroke="#a6a6a6" stroke-width="1.45"/>
<path d="M433.6,156.6 L432.1,157.3 L430.7,158.2 L429.5,159.3 L428.3,160.8 L427.2,162.4 L426.3,164.3 L425.4,166.4 L424.7,168.6 L424.1,171.1 L423.7,173.7 L423.4,176.5 L423.2,179.4 L423.1,182.5 L423.2,185.6 L423.5,188.9 L423.9,192.1 L424.4,195.5 L425.0,198.8 L425.8,202.1 L426.7,205.5 L427.7,208.7 L428.8,212.0 L430.0,215.1 L431.3,218.1 L432.7,221.0 L434.2,223.8 L435.8,226.4 L437.4,228.9 L439.1,231.2 L440.8,233.2 L442.5,235.1 L444.3,236.7 L446.1,238.1 L447.8,239.2 L449.6,240.1 L451.3,240.8 L453.0,241.1 L454.7,241.3 L456.3,241.1 L457.8,240.7" stroke="#161616" stroke-width="0.55"/>
<path d="M435.0,156.1 L433.6,156.8 L432.2,157.7 L430.9,158.9 L429.8,160.3 L428.7,161.9 L427.7,163.8 L426.9,165.9 L426.2,168.2 L425.6,170.6 L425.2,173.2 L424.8,176.0 L424.7,179.0 L424.6,182.0 L424.7,185.1 L425.0,188.3 L425.3,191.6 L425.9,194.9 L426.5,198.3 L427.3,201.6 L428.2,204.9 L429.2,208.2 L430.3,211.4 L431.5,214.6 L432.8,217.6 L434.2,220.5 L435.7,223.3 L437.3,225.9 L438.9,228.3 L440.6,230.6 L442.3,232.6 L444.0,234.5 L445.8,236.1 L447.5,237.5 L449.3,238.6 L451.0,239.5 L452.8,240.2 L454.5,240.6 L456.1,240.7 L457.7,240.5 L459.2,240.1" stroke="#a6a6a6" stroke-width="1.45"/>
<path d="M436.4,155.6 L435.0,156.3 L433.6,157.2 L432.3,158.4 L431.1,159.8 L430.1,161.4 L429.1,163.3 L428.3,165.4 L427.6,167.7 L427.0,170.1 L426.5,172.8 L426.2,175.5 L426.0,178.5 L426.0,181.5 L426.1,184.6 L426.3,187.9 L426.7,191.1 L427.2,194.5 L427.9,197.8 L428.6,201.1 L429.5,204.4 L430.5,207.7 L431.6,210.9 L432.9,214.1 L434.2,217.1 L435.6,220.0 L437.1,222.8 L438.6,225.4 L440.2,227.8 L441.9,230.1 L443.6,232.2 L445.4,234.0 L447.1,235.6 L448.9,237.0 L450.7,238.2 L452.4,239.0 L454.1,239.7 L455.8,240.1 L457.5,240.2 L459.1,240.0 L460.6,239.6" stroke="#161616" stroke-width="0.55"/>
<path d="M437.9,155.2 L436.4,155.8 L435.1,156.8 L433.8,157.9 L432.6,159.3 L431.6,161.0 L430.6,162.8 L429.8,164.9 L429.1,167.2 L428.5,169.6 L428.0,172.3 L427.7,175.1 L427.5,178.0 L427.5,181.0 L427.6,184.1 L427.8,187.3 L428.2,190.6 L428.7,193.9 L429.3,197.3 L430.1,200.6 L431.0,203.9 L432.0,207.2 L433.1,210.4 L434.3,213.5 L435.7,216.5 L437.1,219.4 L438.6,222.2 L440.1,224.8 L441.7,227.3 L443.4,229.5 L445.1,231.6 L446.8,233.4 L448.6,235.0 L450.3,236.4 L452.1,237.6 L453.9,238.5 L455.6,239.1 L457.3,239.5 L458.9,239.6 L460.5,239.5 L462.0,239.1" stroke="#a6a6a6" stroke-width="1.45"/>
<path d="M439.3,154.7 L437.8,155.4 L436.4,156.3 L435.2,157.4 L434.0,158.8 L432.9,160.5 L432.0,162.4 L431.1,164.4 L430.4,166.7 L429.8,169.2 L429.4,171.8 L429.1,174.6 L428.9,177.5 L428.9,180.5 L429.0,183.6 L429.2,186.9 L429.6,190.1 L430.1,193.4 L430.7,196.8 L431.5,200.1 L432.4,203.4 L433.4,206.7 L434.5,209.9 L435.7,213.0 L437.0,216.1 L438.4,219.0 L439.9,221.7 L441.5,224.3 L443.1,226.8 L444.8,229.0 L446.5,231.1 L448.2,232.9 L449.9,234.6 L451.7,235.9 L453.5,237.1 L455.2,238.0 L456.9,238.6 L458.6,239.0 L460.3,239.1 L461.9,239.0 L463.4,238.6" stroke="#161616" stroke-width="0.55"/>
<path d="M440.7,154.2 L439.3,154.9 L437.9,155.8 L436.6,157.0 L435.5,158.4 L434.4,160.0 L433.5,161.9 L432.6,164.0 L431.9,166.2 L431.3,168.7 L430.9,171.3 L430.6,174.1 L430.4,177.0 L430.3,180.0 L430.4,183.1 L430.7,186.4 L431.1,189.6 L431.6,192.9 L432.2,196.3 L433.0,199.6 L433.9,202.9 L434.9,206.2 L436.0,209.4 L437.2,212.5 L438.5,215.5 L439.9,218.4 L441.4,221.2 L442.9,223.8 L444.6,226.2 L446.2,228.5 L447.9,230.5 L449.7,232.4 L451.4,234.0 L453.2,235.4 L454.9,236.5 L456.7,237.4 L458.4,238.0 L460.1,238.4 L461.7,238.5 L463.3,238.4 L464.8,238.0" stroke="#a6a6a6" stroke-width="1.45"/>
<path d="M442.1,153.8 L440.6,154.4 L439.3,155.3 L438.0,156.5 L436.8,157.9 L435.8,159.5 L434.8,161.4 L434.0,163.5 L433.3,165.7 L432.7,168.2 L432.2,170.8 L431.9,173.6 L431.8,176.5 L431.7,179.5 L431.8,182.7 L432.0,185.9 L432.4,189.1 L432.9,192.4 L433.6,195.8 L434.3,199.1 L435.2,202.4 L436.2,205.7 L437.3,208.9 L438.6,212.0 L439.9,215.0 L441.3,217.9 L442.8,220.7 L444.3,223.3 L445.9,225.7 L447.6,228.0 L449.3,230.0 L451.0,231.9 L452.8,233.5 L454.5,234.9 L456.3,236.0 L458.0,236.9 L459.8,237.5 L461.4,237.9 L463.1,238.0 L464.7,237.9 L466.2,237.5" stroke="#161616" stroke-width="0.55"/>
<path d="M443.6,153.3 L442.1,154.0 L440.8,154.9 L439.5,156.0 L438.3,157.4 L437.3,159.1 L436.3,160.9 L435.5,163.0 L434.8,165.3 L434.2,167.7 L433.7,170.3 L433.4,173.1 L433.2,176.0 L433.2,179.0 L433.3,182.2 L433.5,185.4 L433.9,188.6 L434.4,191.9 L435.1,195.2 L435.8,198.6 L436.7,201.9 L437.7,205.1 L438.8,208.3 L440.0,211.4 L441.4,214.5 L442.8,217.4 L444.2,220.1 L445.8,222.7 L447.4,225.1 L449.1,227.4 L450.8,229.4 L452.5,231.3 L454.2,232.9 L456.0,234.3 L457.8,235.4 L459.5,236.3 L461.2,237.0 L462.9,237.3 L464.5,237.4 L466.1,237.3 L467.6,236.9" stroke="#a6a6a6" stroke-width="1.45"/>
<path d="M444.9,152.8 L443.5,153.5 L442.1,154.4 L440.9,155.5 L439.7,156.9 L438.6,158.6 L437.7,160.4 L436.8,162.5 L436.1,164.8 L435.5,167.2 L435.1,169.8 L434.8,172.6 L434.6,175.5 L434.6,178.5 L434.7,181.7 L434.9,184.9 L435.3,188.1 L435.8,191.4 L436.4,194.8 L437.2,198.1 L438.1,201.4 L439.1,204.6 L440.2,207.8 L441.4,211.0 L442.7,214.0 L444.1,216.9 L445.6,219.6 L447.1,222.2 L448.8,224.7 L450.4,226.9 L452.1,229.0 L453.9,230.8 L455.6,232.4 L457.4,233.8 L459.1,234.9 L460.9,235.8 L462.6,236.5 L464.3,236.8 L465.9,237.0 L467.5,236.8 L469.0,236.4" stroke="#161616" stroke-width="0.55"/>
<path d="M446.4,152.3 L445.0,153.0 L443.6,153.9 L442.3,155.1 L441.2,156.5 L440.1,158.1 L439.2,160.0 L438.3,162.0 L437.6,164.3 L437.0,166.7 L436.6,169.4 L436.3,172.1 L436.1,175.0 L436.1,178.0 L436.2,181.2 L436.4,184.4 L436.8,187.6 L437.3,190.9 L437.9,194.2 L438.7,197.6 L439.6,200.8 L440.6,204.1 L441.7,207.3 L442.9,210.4 L444.2,213.4 L445.6,216.3 L447.1,219.1 L448.6,221.7 L450.2,224.1 L451.9,226.3 L453.6,228.4 L455.3,230.2 L457.1,231.8 L458.8,233.2 L460.6,234.3 L462.3,235.2 L464.0,235.9 L465.7,236.3 L467.3,236.4 L468.9,236.2 L470.4,235.8" stroke="#a6a6a6" stroke-width="1.45"/>
<path d="M447.8,151.9 L446.3,152.5 L445.0,153.4 L443.7,154.6 L442.5,156.0 L441.5,157.6 L440.5,159.5 L439.7,161.5 L439.0,163.8 L438.4,166.2 L438.0,168.9 L437.6,171.6 L437.5,174.5 L437.4,177.6 L437.5,180.7 L437.8,183.9 L438.1,187.1 L438.6,190.4 L439.3,193.7 L440.0,197.1 L440.9,200.4 L441.9,203.6 L443.0,206.8 L444.3,209.9 L445.6,212.9 L447.0,215.8 L448.4,218.6 L450.0,221.2 L451.6,223.6 L453.3,225.8 L455.0,227.9 L456.7,229.7 L458.4,231.3 L460.2,232.7 L461.9,233.9 L463.7,234.7 L465.4,235.4 L467.1,235.8 L468.7,235.9 L470.3,235.7 L471.8,235.3" stroke="#161616" stroke-width="0.55"/>
<path d="M449.3,151.4 L447.8,152.1 L446.5,153.0 L445.2,154.1 L444.0,155.5 L443.0,157.2 L442.0,159.0 L441.2,161.1 L440.5,163.3 L439.9,165.8 L439.4,168.4 L439.1,171.1 L439.0,174.0 L438.9,177.1 L439.0,180.2 L439.3,183.4 L439.6,186.6 L440.1,189.9 L440.8,193.2 L441.5,196.5 L442.4,199.8 L443.4,203.1 L444.5,206.3 L445.7,209.4 L447.0,212.4 L448.4,215.3 L449.9,218.0 L451.5,220.6 L453.1,223.0 L454.7,225.3 L456.4,227.3 L458.1,229.1 L459.9,230.8 L461.6,232.1 L463.4,233.3 L465.1,234.2 L466.8,234.8 L468.5,235.2 L470.2,235.3 L471.7,235.2 L473.3,234.8" stroke="#a6a6a6" stroke-width="1.45"/>
<path d="M450.6,150.9 L449.2,151.6 L447.8,152.5 L446.6,153.6 L445.4,155.0 L444.3,156.7 L443.4,158.5 L442.5,160.6 L441.8,162.8 L441.3,165.3 L440.8,167.9 L440.5,170.7 L440.3,173.5 L440.3,176.6 L440.4,179.7 L440.6,182.9 L441.0,186.1 L441.5,189.4 L442.1,192.7 L442.9,196.0 L443.8,199.3 L444.8,202.6 L445.9,205.8 L447.1,208.9 L448.4,211.9 L449.8,214.8 L451.3,217.5 L452.8,220.1 L454.4,222.5 L456.1,224.8 L457.8,226.8 L459.5,228.7 L461.3,230.3 L463.0,231.6 L464.8,232.8 L466.5,233.7 L468.2,234.3 L469.9,234.7 L471.5,234.8 L473.1,234.7 L474.6,234.3" stroke="#161616" stroke-width="0.55"/>
<path d="M452.1,150.4 L450.7,151.1 L449.3,152.0 L448.0,153.2 L446.9,154.6 L445.8,156.2 L444.9,158.0 L444.0,160.1 L443.3,162.4 L442.8,164.8 L442.3,167.4 L442.0,170.2 L441.8,173.1 L441.8,176.1 L441.9,179.2 L442.1,182.4 L442.5,185.6 L443.0,188.9 L443.6,192.2 L444.4,195.5 L445.3,198.8 L446.3,202.0 L447.4,205.2 L448.6,208.3 L449.9,211.3 L451.3,214.2 L452.8,217.0 L454.3,219.6 L455.9,222.0 L457.6,224.2 L459.2,226.3 L461.0,228.1 L462.7,229.7 L464.5,231.1 L466.2,232.2 L467.9,233.1 L469.7,233.7 L471.3,234.1 L473.0,234.2 L474.5,234.1 L476.1,233.7" stroke="#a6a6a6" stroke-width="1.45"/>
<path d="M453.5,150.0 L452.0,150.6 L450.7,151.5 L449.4,152.7 L448.2,154.1 L447.2,155.7 L446.2,157.6 L445.4,159.6 L444.7,161.9 L444.1,164.3 L443.7,166.9 L443.4,169.7 L443.2,172.6 L443.1,175.6 L443.2,178.7 L443.5,181.9 L443.9,185.1 L444.4,188.4 L445.0,191.7 L445.8,195.0 L446.6,198.3 L447.6,201.6 L448.7,204.7 L450.0,207.8 L451.3,210.8 L452.6,213.7 L454.1,216.5 L455.7,219.1 L457.3,221.5 L458.9,223.7 L460.6,225.8 L462.3,227.6 L464.1,229.2 L465.8,230.6 L467.6,231.7 L469.3,232.6 L471.0,233.2 L472.7,233.6 L474.3,233.7 L475.9,233.6 L477.4,233.2" stroke="#161616" stroke-width="0.55"/>
<path d="M454.9,149.5 L453.5,150.2 L452.2,151.1 L450.9,152.2 L449.7,153.6 L448.7,155.2 L447.7,157.1 L446.9,159.1 L446.2,161.4 L445.6,163.8 L445.2,166.4 L444.9,169.2 L444.7,172.1 L444.6,175.1 L444.7,178.2 L445.0,181.4 L445.3,184.6 L445.8,187.9 L446.5,191.2 L447.2,194.5 L448.1,197.8 L449.1,201.0 L450.2,204.2 L451.4,207.3 L452.7,210.3 L454.1,213.2 L455.6,215.9 L457.1,218.5 L458.7,220.9 L460.4,223.2 L462.1,225.2 L463.8,227.0 L465.5,228.6 L467.3,230.0 L469.0,231.1 L470.8,232.0 L472.5,232.6 L474.1,233.0 L475.8,233.1 L477.4,233.0 L478.9,232.6" stroke="#a6a6a6" stroke-width="1.45"/>
<path d="M456.3,149.0 L454.9,149.7 L453.5,150.6 L452.3,151.7 L451.1,153.1 L450.0,154.8 L449.1,156.6 L448.3,158.7 L447.6,160.9 L447.0,163.3 L446.5,165.9 L446.2,168.7 L446.0,171.6 L446.0,174.6 L446.1,177.7 L446.3,180.9 L446.7,184.1 L447.2,187.4 L447.8,190.7 L448.6,194.0 L449.5,197.3 L450.5,200.5 L451.6,203.7 L452.8,206.8 L454.1,209.8 L455.5,212.7 L457.0,215.4 L458.5,218.0 L460.1,220.4 L461.8,222.7 L463.4,224.7 L465.2,226.5 L466.9,228.1 L468.7,229.5 L470.4,230.6 L472.1,231.5 L473.8,232.2 L475.5,232.5 L477.1,232.7 L478.7,232.5 L480.2,232.1" stroke="#161616" stroke-width="0.55"/>
<path d="M457.8,148.6 L456.3,149.2 L455.0,150.1 L453.7,151.3 L452.6,152.7 L451.5,154.3 L450.6,156.1 L449.7,158.2 L449.0,160.4 L448.5,162.9 L448.0,165.5 L447.7,168.2 L447.5,171.1 L447.5,174.1 L447.6,177.2 L447.8,180.4 L448.2,183.6 L448.7,186.9 L449.3,190.2 L450.1,193.5 L451.0,196.8 L452.0,200.0 L453.1,203.2 L454.3,206.3 L455.6,209.2 L457.0,212.1 L458.4,214.9 L460.0,217.4 L461.6,219.9 L463.2,222.1 L464.9,224.1 L466.6,225.9 L468.4,227.5 L470.1,228.9 L471.9,230.1 L473.6,230.9 L475.3,231.6 L477.0,231.9 L478.6,232.1 L480.2,231.9 L481.7,231.5" stroke="#a6a6a6" stroke-width="1.45"/>
<path d="M459.1,148.1 L457.7,148.7 L456.4,149.6 L455.1,150.8 L453.9,152.2 L452.9,153.8 L451.9,155.6 L451.1,157.7 L450.4,159.9 L449.8,162.4 L449.4,165.0 L449.1,167.7 L448.9,170.6 L448.9,173.6 L449.0,176.7 L449.2,179.9 L449.6,183.1 L450.1,186.4 L450.7,189.7 L451.5,193.0 L452.3,196.3 L453.3,199.5 L454.4,202.7 L455.6,205.8 L456.9,208.8 L458.3,211.6 L459.8,214.4 L461.3,217.0 L462.9,219.4 L464.6,221.6 L466.3,223.6 L468.0,225.5 L469.7,227.1 L471.5,228.4 L473.2,229.6 L474.9,230.4 L476.7,231.1 L478.3,231.5 L480.0,231.6 L481.5,231.4 L483.0,231.0" stroke="#161616" stroke-width="0.55"/>
<path d="M460.6,147.6 L459.2,148.3 L457.8,149.2 L456.6,150.3 L455.4,151.7 L454.4,153.3 L453.4,155.2 L452.6,157.2 L451.9,159.5 L451.3,161.9 L450.9,164.5 L450.6,167.2 L450.4,170.1 L450.4,173.1 L450.5,176.2 L450.7,179.4 L451.1,182.6 L451.6,185.9 L452.2,189.2 L453.0,192.5 L453.8,195.7 L454.8,199.0 L455.9,202.1 L457.1,205.2 L458.4,208.2 L459.8,211.1 L461.3,213.8 L462.8,216.4 L464.4,218.8 L466.1,221.0 L467.7,223.1 L469.5,224.9 L471.2,226.5 L472.9,227.8 L474.7,229.0 L476.4,229.9 L478.1,230.5 L479.8,230.9 L481.4,231.0 L483.0,230.8 L484.5,230.4" stroke="#a6a6a6" stroke-width="1.45"/>
<path d="M462.0,147.1 L460.6,147.8 L459.2,148.7 L457.9,149.8 L456.8,151.2 L455.7,152.8 L454.8,154.7 L454.0,156.7 L453.3,159.0 L452.7,161.4 L452.2,164.0 L451.9,166.7 L451.8,169.6 L451.7,172.6 L451.8,175.7 L452.1,178.9 L452.4,182.1 L452.9,185.4 L453.6,188.7 L454.3,192.0 L455.2,195.2 L456.2,198.5 L457.3,201.6 L458.5,204.7 L459.8,207.7 L461.2,210.6 L462.6,213.3 L464.2,215.9 L465.8,218.3 L467.4,220.5 L469.1,222.6 L470.8,224.4 L472.6,226.0 L474.3,227.4 L476.0,228.5 L477.8,229.4 L479.5,230.0 L481.1,230.4 L482.8,230.5 L484.3,230.4 L485.8,230.0" stroke="#161616" stroke-width="0.55"/>
<path d="M463.5,146.7 L462.0,147.3 L460.7,148.2 L459.4,149.4 L458.3,150.8 L457.2,152.4 L456.3,154.2 L455.5,156.3 L454.8,158.5 L454.2,160.9 L453.7,163.5 L453.4,166.2 L453.3,169.1 L453.2,172.1 L453.3,175.2 L453.5,178.4 L453.9,181.6 L454.4,184.9 L455.0,188.2 L455.8,191.4 L456.7,194.7 L457.7,197.9 L458.8,201.1 L460.0,204.2 L461.3,207.2 L462.7,210.0 L464.1,212.8 L465.7,215.3 L467.2,217.7 L468.9,220.0 L470.6,222.0 L472.3,223.8 L474.0,225.4 L475.8,226.8 L477.5,227.9 L479.2,228.8 L480.9,229.4 L482.6,229.8 L484.2,229.9 L485.8,229.8 L487.3,229.4" stroke="#a6a6a6" stroke-width="1.45"/>
<path d="M464.8,146.2 L463.4,146.8 L462.1,147.7 L460.8,148.9 L459.6,150.3 L458.6,151.9 L457.6,153.7 L456.8,155.8 L456.1,158.0 L455.5,160.4 L455.1,163.0 L454.8,165.8 L454.6,168.6 L454.6,171.6 L454.7,174.7 L454.9,177.9 L455.3,181.1 L455.8,184.4 L456.4,187.7 L457.2,191.0 L458.0,194.2 L459.0,197.4 L460.1,200.6 L461.3,203.7 L462.6,206.7 L464.0,209.5 L465.5,212.3 L467.0,214.8 L468.6,217.3 L470.3,219.5 L471.9,221.5 L473.7,223.3 L475.4,224.9 L477.1,226.3 L478.9,227.4 L480.6,228.3 L482.3,228.9 L484.0,229.3 L485.6,229.4 L487.1,229.3 L488.6,228.9" stroke="#161616" stroke-width="0.55"/>
<path d="M466.3,145.7 L464.9,146.4 L463.5,147.3 L462.3,148.4 L461.1,149.8 L460.1,151.4 L459.1,153.2 L458.3,155.3 L457.6,157.5 L457.0,159.9 L456.6,162.5 L456.3,165.3 L456.1,168.1 L456.1,171.1 L456.2,174.2 L456.4,177.4 L456.8,180.6 L457.3,183.9 L457.9,187.1 L458.7,190.4 L459.5,193.7 L460.5,196.9 L461.6,200.1 L462.8,203.1 L464.1,206.1 L465.5,209.0 L467.0,211.7 L468.5,214.3 L470.1,216.7 L471.7,218.9 L473.4,220.9 L475.1,222.7 L476.8,224.3 L478.6,225.7 L480.3,226.8 L482.0,227.7 L483.7,228.3 L485.4,228.7 L487.0,228.8 L488.6,228.7 L490.1,228.3" stroke="#a6a6a6" stroke-width="1.45"/>
<path d="M467.7,145.2 L466.2,145.9 L464.9,146.8 L463.6,147.9 L462.5,149.3 L461.4,150.9 L460.5,152.8 L459.7,154.8 L459.0,157.0 L458.4,159.5 L458.0,162.0 L457.7,164.8 L457.5,167.7 L457.4,170.6 L457.5,173.7 L457.8,176.9 L458.1,180.1 L458.6,183.4 L459.3,186.7 L460.0,189.9 L460.9,193.2 L461.9,196.4 L463.0,199.6 L464.2,202.7 L465.5,205.6 L466.9,208.5 L468.3,211.2 L469.9,213.8 L471.5,216.2 L473.1,218.4 L474.8,220.4 L476.5,222.3 L478.2,223.8 L479.9,225.2 L481.7,226.3 L483.4,227.2 L485.1,227.9 L486.8,228.2 L488.4,228.3 L489.9,228.2 L491.4,227.8" stroke="#161616" stroke-width="0.55"/>
<path d="M469.2,144.8 L467.7,145.4 L466.4,146.3 L465.1,147.5 L464.0,148.8 L462.9,150.5 L462.0,152.3 L461.2,154.3 L460.5,156.6 L459.9,159.0 L459.5,161.6 L459.1,164.3 L459.0,167.2 L458.9,170.1 L459.0,173.2 L459.3,176.4 L459.6,179.6 L460.1,182.9 L460.8,186.1 L461.5,189.4 L462.4,192.7 L463.4,195.9 L464.5,199.0 L465.7,202.1 L467.0,205.1 L468.3,207.9 L469.8,210.7 L471.3,213.2 L472.9,215.6 L474.6,217.8 L476.2,219.9 L477.9,221.7 L479.7,223.3 L481.4,224.6 L483.1,225.8 L484.9,226.6 L486.6,227.3 L488.2,227.6 L489.8,227.8 L491.4,227.6 L492.9,227.2" stroke="#a6a6a6" stroke-width="1.45"/>
<path d="M470.5,144.3 L469.1,144.9 L467.7,145.8 L466.5,147.0 L465.3,148.4 L464.3,150.0 L463.4,151.8 L462.5,153.8 L461.8,156.1 L461.3,158.5 L460.8,161.1 L460.5,163.8 L460.3,166.7 L460.3,169.7 L460.4,172.7 L460.6,175.9 L461.0,179.1 L461.5,182.4 L462.1,185.6 L462.9,188.9 L463.8,192.2 L464.7,195.4 L465.8,198.5 L467.0,201.6 L468.3,204.6 L469.7,207.4 L471.2,210.2 L472.7,212.7 L474.3,215.1 L475.9,217.4 L477.6,219.4 L479.3,221.2 L481.0,222.8 L482.8,224.1 L484.5,225.3 L486.2,226.1 L487.9,226.8 L489.6,227.1 L491.2,227.3 L492.8,227.1 L494.3,226.7" stroke="#161616" stroke-width="0.55"/>
<path d="M472.0,143.8 L470.6,144.5 L469.2,145.4 L468.0,146.5 L466.8,147.9 L465.8,149.5 L464.8,151.3 L464.0,153.4 L463.3,155.6 L462.8,158.0 L462.3,160.6 L462.0,163.3 L461.8,166.2 L461.8,169.2 L461.9,172.2 L462.1,175.4 L462.5,178.6 L463.0,181.9 L463.6,185.1 L464.4,188.4 L465.2,191.6 L466.2,194.9 L467.3,198.0 L468.5,201.1 L469.8,204.0 L471.2,206.9 L472.6,209.6 L474.2,212.2 L475.8,214.6 L477.4,216.8 L479.1,218.8 L480.8,220.6 L482.5,222.2 L484.2,223.6 L486.0,224.7 L487.7,225.6 L489.4,226.2 L491.0,226.6 L492.6,226.7 L494.2,226.5 L495.7,226.1" stroke="#a6a6a6" stroke-width="1.45"/>
<path d="M473.4,143.3 L471.9,144.0 L470.6,144.9 L469.3,146.0 L468.2,147.4 L467.1,149.0 L466.2,150.8 L465.4,152.9 L464.7,155.1 L464.1,157.5 L463.7,160.1 L463.4,162.8 L463.2,165.7 L463.2,168.7 L463.3,171.7 L463.5,174.9 L463.9,178.1 L464.4,181.4 L465.0,184.6 L465.7,187.9 L466.6,191.2 L467.6,194.4 L468.7,197.5 L469.9,200.6 L471.2,203.6 L472.6,206.4 L474.0,209.1 L475.5,211.7 L477.1,214.1 L478.8,216.3 L480.4,218.3 L482.1,220.1 L483.9,221.7 L485.6,223.1 L487.3,224.2 L489.0,225.1 L490.7,225.7 L492.4,226.1 L494.0,226.2 L495.6,226.0 L497.1,225.7" stroke="#161616" stroke-width="0.55"/>
<path d="M474.8,142.9 L473.4,143.5 L472.1,144.4 L470.8,145.6 L469.7,146.9 L468.6,148.5 L467.7,150.4 L466.9,152.4 L466.2,154.6 L465.6,157.0 L465.2,159.6 L464.9,162.3 L464.7,165.2 L464.6,168.2 L464.7,171.2 L465.0,174.4 L465.3,177.6 L465.8,180.8 L466.5,184.1 L467.2,187.4 L468.1,190.6 L469.1,193.8 L470.2,197.0 L471.4,200.0 L472.7,203.0 L474.0,205.8 L475.5,208.6 L477.0,211.1 L478.6,213.5 L480.2,215.7 L481.9,217.7 L483.6,219.5 L485.3,221.1 L487.1,222.5 L488.8,223.6 L490.5,224.5 L492.2,225.1 L493.8,225.5 L495.4,225.6 L497.0,225.5 L498.5,225.1" stroke="#a6a6a6" stroke-width="1.45"/>
<path d="M476.2,142.4 L474.8,143.0 L473.4,143.9 L472.2,145.1 L471.0,146.4 L470.0,148.1 L469.1,149.9 L468.2,151.9 L467.5,154.1 L467.0,156.5 L466.5,159.1 L466.2,161.8 L466.1,164.7 L466.0,167.7 L466.1,170.8 L466.3,173.9 L466.7,177.1 L467.2,180.4 L467.8,183.6 L468.6,186.9 L469.5,190.1 L470.4,193.3 L471.5,196.5 L472.7,199.5 L474.0,202.5 L475.4,205.4 L476.9,208.1 L478.4,210.6 L480.0,213.0 L481.6,215.2 L483.3,217.2 L485.0,219.1 L486.7,220.6 L488.4,222.0 L490.1,223.1 L491.9,224.0 L493.5,224.6 L495.2,225.0 L496.8,225.1 L498.4,225.0 L499.9,224.6" stroke="#161616" stroke-width="0.55"/>
<path d="M477.7,141.9 L476.3,142.6 L474.9,143.5 L473.7,144.6 L472.5,146.0 L471.5,147.6 L470.5,149.4 L469.7,151.4 L469.0,153.7 L468.5,156.1 L468.0,158.6 L467.7,161.4 L467.5,164.2 L467.5,167.2 L467.6,170.2 L467.8,173.4 L468.2,176.6 L468.7,179.8 L469.3,183.1 L470.1,186.4 L470.9,189.6 L471.9,192.8 L473.0,195.9 L474.2,199.0 L475.5,202.0 L476.9,204.8 L478.3,207.5 L479.9,210.1 L481.4,212.5 L483.1,214.7 L484.7,216.7 L486.4,218.5 L488.1,220.1 L489.9,221.4 L491.6,222.5 L493.3,223.4 L495.0,224.0 L496.6,224.4 L498.3,224.5 L499.8,224.4 L501.3,224.0" stroke="#a6a6a6" stroke-width="1.45"/>
<path d="M479.0,141.4 L477.6,142.1 L476.3,143.0 L475.0,144.1 L473.9,145.5 L472.8,147.1 L471.9,148.9 L471.1,151.0 L470.4,153.2 L469.8,155.6 L469.4,158.2 L469.1,160.9 L468.9,163.7 L468.9,166.7 L469.0,169.8 L469.2,172.9 L469.6,176.1 L470.1,179.3 L470.7,182.6 L471.4,185.9 L472.3,189.1 L473.3,192.3 L474.4,195.4 L475.6,198.5 L476.9,201.5 L478.2,204.3 L479.7,207.0 L481.2,209.6 L482.8,212.0 L484.4,214.2 L486.1,216.2 L487.8,218.0 L489.5,219.6 L491.2,220.9 L493.0,222.0 L494.7,222.9 L496.4,223.5 L498.0,223.9 L499.6,224.0 L501.2,223.9 L502.7,223.5" stroke="#161616" stroke-width="0.55"/>
<path d="M480.5,141.0 L479.1,141.6 L477.8,142.5 L476.5,143.7 L475.4,145.0 L474.3,146.6 L473.4,148.5 L472.6,150.5 L471.9,152.7 L471.3,155.1 L470.9,157.7 L470.6,160.4 L470.4,163.2 L470.4,166.2 L470.5,169.3 L470.7,172.4 L471.1,175.6 L471.6,178.8 L472.2,182.1 L472.9,185.3 L473.8,188.6 L474.8,191.8 L475.9,194.9 L477.1,198.0 L478.3,200.9 L479.7,203.8 L481.2,206.5 L482.7,209.0 L484.3,211.4 L485.9,213.6 L487.6,215.6 L489.3,217.4 L491.0,219.0 L492.7,220.3 L494.4,221.5 L496.1,222.3 L497.8,223.0 L499.5,223.3 L501.1,223.4 L502.6,223.3 L504.1,222.9" stroke="#a6a6a6" stroke-width="1.45"/>
<path d="M481.9,140.5 L480.5,141.1 L479.1,142.0 L477.9,143.2 L476.7,144.5 L475.7,146.1 L474.8,148.0 L473.9,150.0 L473.3,152.2 L472.7,154.6 L472.2,157.2 L471.9,159.9 L471.8,162.7 L471.7,165.7 L471.8,168.8 L472.1,171.9 L472.4,175.1 L472.9,178.3 L473.5,181.6 L474.3,184.9 L475.2,188.1 L476.1,191.3 L477.2,194.4 L478.4,197.5 L479.7,200.4 L481.1,203.3 L482.5,206.0 L484.1,208.5 L485.6,210.9 L487.3,213.1 L488.9,215.1 L490.6,216.9 L492.3,218.5 L494.1,219.9 L495.8,221.0 L497.5,221.8 L499.2,222.5 L500.8,222.8 L502.4,223.0 L504.0,222.8 L505.5,222.4" stroke="#161616" stroke-width="0.55"/>
<path d="M483.4,140.0 L482.0,140.7 L480.6,141.6 L479.4,142.7 L478.2,144.1 L477.2,145.7 L476.3,147.5 L475.4,149.5 L474.7,151.7 L474.2,154.1 L473.7,156.7 L473.4,159.4 L473.3,162.2 L473.2,165.2 L473.3,168.3 L473.6,171.4 L473.9,174.6 L474.4,177.8 L475.0,181.1 L475.8,184.3 L476.7,187.6 L477.6,190.7 L478.7,193.9 L479.9,196.9 L481.2,199.9 L482.6,202.7 L484.0,205.4 L485.5,208.0 L487.1,210.3 L488.7,212.5 L490.4,214.5 L492.1,216.3 L493.8,217.9 L495.5,219.3 L497.2,220.4 L498.9,221.3 L500.6,221.9 L502.3,222.3 L503.9,222.4 L505.4,222.2 L506.9,221.8" stroke="#a6a6a6" stroke-width="1.45"/>
<path d="M484.7,139.5 L483.3,140.2 L482.0,141.1 L480.7,142.2 L479.6,143.6 L478.6,145.2 L477.6,147.0 L476.8,149.0 L476.1,151.2 L475.5,153.6 L475.1,156.2 L474.8,158.9 L474.6,161.8 L474.6,164.7 L474.7,167.8 L474.9,170.9 L475.3,174.1 L475.8,177.3 L476.4,180.6 L477.1,183.8 L478.0,187.1 L479.0,190.3 L480.1,193.4 L481.3,196.4 L482.6,199.4 L483.9,202.2 L485.4,204.9 L486.9,207.5 L488.5,209.8 L490.1,212.0 L491.8,214.1 L493.5,215.8 L495.2,217.4 L496.9,218.8 L498.6,219.9 L500.3,220.8 L502.0,221.4 L503.6,221.8 L505.2,221.9 L506.8,221.7 L508.3,221.3" stroke="#161616" stroke-width="0.55"/>
<path d="M486.2,139.1 L484.8,139.7 L483.5,140.6 L482.2,141.8 L481.1,143.1 L480.0,144.7 L479.1,146.5 L478.3,148.6 L477.6,150.8 L477.0,153.2 L476.6,155.7 L476.3,158.4 L476.1,161.3 L476.1,164.2 L476.2,167.3 L476.4,170.4 L476.8,173.6 L477.3,176.8 L477.9,180.1 L478.6,183.3 L479.5,186.5 L480.5,189.7 L481.6,192.8 L482.8,195.9 L484.0,198.8 L485.4,201.7 L486.9,204.4 L488.4,206.9 L489.9,209.3 L491.6,211.5 L493.2,213.5 L494.9,215.3 L496.6,216.8 L498.3,218.2 L500.1,219.3 L501.8,220.2 L503.4,220.8 L505.1,221.2 L506.7,221.3 L508.2,221.2 L509.7,220.8" stroke="#a6a6a6" stroke-width="1.45"/>
<path d="M487.6,138.6 L486.2,139.2 L484.8,140.1 L483.6,141.3 L482.4,142.6 L481.4,144.2 L480.5,146.0 L479.7,148.1 L479.0,150.3 L478.4,152.7 L478.0,155.2 L477.7,157.9 L477.5,160.8 L477.4,163.7 L477.5,166.8 L477.8,169.9 L478.1,173.1 L478.6,176.3 L479.3,179.6 L480.0,182.8 L480.9,186.0 L481.8,189.2 L482.9,192.4 L484.1,195.4 L485.4,198.3 L486.8,201.2 L488.2,203.9 L489.7,206.4 L491.3,208.8 L492.9,211.0 L494.6,213.0 L496.3,214.8 L498.0,216.4 L499.7,217.7 L501.4,218.8 L503.1,219.7 L504.8,220.3 L506.5,220.7 L508.1,220.8 L509.6,220.7 L511.1,220.3" stroke="#161616" stroke-width="0.55"/>
<path d="M489.1,138.1 L487.6,138.8 L486.3,139.7 L485.1,140.8 L483.9,142.2 L482.9,143.8 L482.0,145.6 L481.1,147.6 L480.5,149.8 L479.9,152.2 L479.5,154.7 L479.2,157.4 L479.0,160.3 L478.9,163.2 L479.0,166.3 L479.3,169.4 L479.6,172.6 L480.1,175.8 L480.7,179.1 L481.5,182.3 L482.4,185.5 L483.3,188.7 L484.4,191.8 L485.6,194.8 L486.9,197.8 L488.3,200.6 L489.7,203.3 L491.2,205.8 L492.8,208.2 L494.4,210.4 L496.1,212.4 L497.7,214.2 L499.5,215.8 L501.2,217.1 L502.9,218.2 L504.6,219.1 L506.3,219.7 L507.9,220.1 L509.5,220.2 L511.0,220.1 L512.5,219.7" stroke="#a6a6a6" stroke-width="1.45"/>
<path d="M490.4,137.6 L489.0,138.3 L487.7,139.2 L486.4,140.3 L485.3,141.7 L484.3,143.3 L483.3,145.1 L482.5,147.1 L481.8,149.3 L481.3,151.7 L480.8,154.3 L480.5,157.0 L480.3,159.8 L480.3,162.7 L480.4,165.8 L480.6,168.9 L481.0,172.1 L481.5,175.3 L482.1,178.6 L482.9,181.8 L483.7,185.0 L484.7,188.2 L485.8,191.3 L487.0,194.4 L488.3,197.3 L489.6,200.1 L491.1,202.8 L492.6,205.4 L494.1,207.7 L495.8,209.9 L497.4,211.9 L499.1,213.7 L500.8,215.3 L502.5,216.6 L504.2,217.7 L505.9,218.6 L507.6,219.2 L509.3,219.6 L510.9,219.7 L512.4,219.6 L513.9,219.2" stroke="#161616" stroke-width="0.55"/>
<path d="M491.9,137.2 L490.5,137.8 L489.2,138.7 L487.9,139.8 L486.8,141.2 L485.7,142.8 L484.8,144.6 L484.0,146.6 L483.3,148.8 L482.7,151.2 L482.3,153.8 L482.0,156.5 L481.8,159.3 L481.8,162.2 L481.9,165.3 L482.1,168.4 L482.5,171.6 L483.0,174.8 L483.6,178.0 L484.3,181.3 L485.2,184.5 L486.2,187.7 L487.3,190.8 L488.5,193.8 L489.7,196.7 L491.1,199.6 L492.5,202.3 L494.0,204.8 L495.6,207.2 L497.2,209.3 L498.9,211.3 L500.6,213.1 L502.3,214.7 L504.0,216.1 L505.7,217.2 L507.4,218.0 L509.1,218.7 L510.7,219.0 L512.3,219.1 L513.9,219.0 L515.3,218.6" stroke="#a6a6a6" stroke-width="1.45"/>
<path d="M493.3,136.7 L491.8,137.3 L490.5,138.2 L489.3,139.4 L488.1,140.7 L487.1,142.3 L486.2,144.1 L485.4,146.1 L484.7,148.3 L484.1,150.7 L483.7,153.3 L483.4,156.0 L483.2,158.8 L483.2,161.8 L483.3,164.8 L483.5,167.9 L483.9,171.1 L484.3,174.3 L485.0,177.6 L485.7,180.8 L486.6,184.0 L487.6,187.2 L488.6,190.3 L489.8,193.3 L491.1,196.3 L492.5,199.1 L493.9,201.8 L495.4,204.3 L497.0,206.7 L498.6,208.9 L500.3,210.9 L501.9,212.6 L503.6,214.2 L505.4,215.6 L507.1,216.7 L508.8,217.5 L510.4,218.2 L512.1,218.5 L513.7,218.6 L515.2,218.5 L516.7,218.1" stroke="#161616" stroke-width="0.55"/>
<path d="M494.7,136.2 L493.3,136.9 L492.0,137.8 L490.8,138.9 L489.6,140.3 L488.6,141.8 L487.7,143.7 L486.9,145.7 L486.2,147.9 L485.6,150.3 L485.2,152.8 L484.9,155.5 L484.7,158.3 L484.7,161.3 L484.8,164.3 L485.0,167.4 L485.3,170.6 L485.8,173.8 L486.5,177.0 L487.2,180.3 L488.1,183.5 L489.0,186.6 L490.1,189.7 L491.3,192.8 L492.6,195.7 L493.9,198.5 L495.4,201.2 L496.9,203.7 L498.5,206.1 L500.1,208.3 L501.7,210.3 L503.4,212.1 L505.1,213.6 L506.8,215.0 L508.5,216.1 L510.2,217.0 L511.9,217.6 L513.5,217.9 L515.1,218.1 L516.7,217.9 L518.1,217.5" stroke="#a6a6a6" stroke-width="1.45"/>
<path d="M496.1,135.7 L494.7,136.4 L493.4,137.3 L492.1,138.4 L491.0,139.8 L490.0,141.4 L489.0,143.2 L488.2,145.2 L487.5,147.4 L487.0,149.8 L486.5,152.3 L486.2,155.0 L486.1,157.8 L486.0,160.8 L486.1,163.8 L486.3,166.9 L486.7,170.1 L487.2,173.3 L487.8,176.5 L488.6,179.8 L489.4,183.0 L490.4,186.1 L491.5,189.3 L492.7,192.3 L493.9,195.2 L495.3,198.0 L496.7,200.7 L498.3,203.2 L499.8,205.6 L501.4,207.8 L503.1,209.8 L504.8,211.6 L506.5,213.1 L508.2,214.5 L509.9,215.6 L511.6,216.5 L513.3,217.1 L514.9,217.5 L516.5,217.6 L518.0,217.4 L519.5,217.0" stroke="#161616" stroke-width="0.55"/>
<rect x="380" y="125" width="125" height="140" fill="url(#gthr)" stroke="none"/>
</g>
<path d="M395.3,169.4 L481.2,138.7" fill="none" stroke-width="0.7"/>
<path d="M420.2,255.2 L495,230.3" fill="none" stroke-width="0.9" stroke-dasharray="1.2 0.5"/>
<path d="M481.5,149.5 C484,143 487,139.5 490.2,137 C493,135.3 495.5,134.8 497.7,135 C500.5,135 503,135.5 505.2,136.3 C507,137 508.2,137.8 509.5,139.2 L481.5,151.5 Z" fill="#585858" stroke-width="0.7"/>
<polygon points="470.3,154.6 513.2,138.4 522,166.4 477.5,179.6" fill="#aaa"/>
<polygon points="486.3,181.4 552,158.5 578,236 561.4,240.8 540,260 500,250" fill="#aaa"/>
<polygon points="477.5,179.6 522,166.4 550.9,158.9 486.3,181.4 478,181.8" fill="#111" stroke-width="0.5"/>
<polygon points="513.2,138.4 537,130.6 584.1,122.7 629.6,126.4 595,132.5 558.4,131.3 537.5,130.5" fill="#5c5c5c"/>
<polygon points="513.2,138.4 537.3,130.5 558.5,131.3 587.2,230.4 575.4,235.4 550.9,158.9 522,166.4" fill="#efefef"/>
<polygon points="558.5,131.3 595,132.5 638.7,182.5 640,215 587.2,230.8" fill="#aaa"/>
<polygon points="595,132.5 629.6,126.4 675,176.2 638.7,182.5" fill="#666"/>
<path d="M561.4,240.8 L572.7,236.4 L587.1,231.4 L626.6,218.9 L630.4,223.9 L620.3,228.9 L580.2,242.7 C576,244 570,245.3 562,245.4 Z" fill="#141414" stroke-width="0.5"/>
<path d="M633.3,183.2 L676.6,177 L686.6,175.1 C690,176 692.5,177.8 694.1,180.1 C696,183 697.5,186.5 697.9,190.2 C698,194 697.5,197.5 696,200.2 C694.5,202.5 692.5,204 690.4,204.6 L665.3,210.2 L640,214 Z" fill="url(#gpin)"/>
<path d="M630.2,186.4 L633.3,183.2 C636,182.8 638,183 640.2,183.9 C642.5,185 644.5,186 645.8,187.6 C647.5,189.5 648.5,191.5 649,193.3 L648.3,196.4 L640,192 Z" fill="#b8b8b8" stroke-width="0.6"/>
</g>
<defs>
<linearGradient id="gdk" x1="0" y1="0" x2="0" y2="1"><stop offset="0" stop-color="#5a5a5a"/><stop offset="0.5" stop-color="#444"/><stop offset="1" stop-color="#1a1a1a"/></linearGradient>
<linearGradient id="gbev" x1="0" y1="0" x2="0.1" y2="1"><stop offset="0" stop-color="#c4c4c4"/><stop offset="0.4" stop-color="#999"/><stop offset="1" stop-color="#2a2a2a"/></linearGradient>
<linearGradient id="gbev2" x1="0" y1="0" x2="0.1" y2="1"><stop offset="0" stop-color="#333"/><stop offset="0.5" stop-color="#888"/><stop offset="1" stop-color="#b4b4b4"/></linearGradient>
<linearGradient id="gbev3" x1="0" y1="0" x2="0.1" y2="1"><stop offset="0" stop-color="#aaa"/><stop offset="0.4" stop-color="#c8c8c8"/><stop offset="1" stop-color="#888"/></linearGradient>
<linearGradient id="ghole2" x1="0" y1="0" x2="0.3" y2="1"><stop offset="0" stop-color="#1c1c1c"/><stop offset="0.5" stop-color="#555"/><stop offset="1" stop-color="#909090"/></linearGradient>
<linearGradient id="gbend" x1="0" y1="0" x2="0.6" y2="1"><stop offset="0" stop-color="#b0b0b0"/><stop offset="0.45" stop-color="#808080"/><stop offset="1" stop-color="#1e1e1e"/></linearGradient>
<linearGradient id="gbend2" x1="0" y1="0" x2="0.3" y2="1"><stop offset="0" stop-color="#333"/><stop offset="0.5" stop-color="#888"/><stop offset="1" stop-color="#aaa"/></linearGradient>
</defs>
<g stroke="#111" stroke-width="0.9" stroke-linejoin="round" stroke-linecap="round">
<polygon points="681,461.5 683.6,462.3 687,472.6 685,473.6" fill="#5c5cb0" stroke-width="0.5"/>
<!-- back tine end (below link) -->
<path d="M645.6,526.2 L675,527.5 C668,537 655,541 636.2,544.5 L628.7,543.7 Z" fill="#1c1c1c"/>
<path d="M645.6,526.2 L661.2,526.2 C657,534 648,540 636.2,543.7 L628.7,543.7 Z" fill="#aaa"/>
<!-- dark side face of arm -->
<path d="M547.6,222 L557,220.7 L561.4,241 L562.6,260.3 L567.6,266.5 L570.2,266.8 L622.8,258.8 L624.1,256.5 L620.3,228.9 L630.4,224.5 L637.3,267.8 L636.7,272.8 L634.1,275.3 L627.2,276.6 L626.6,280.3 L632.9,306 L640,337.5 L655,387.5 L670,437.5 L682.5,468.5 L686,474 L668,482 L646,476 L632.5,475 L620,445 L605,400 L590,350 L576.2,300 L573.5,290.3 L572.9,288.4 L559.7,285.9 L557.8,282.7 Z" fill="#555"/>
<!-- U floor -->
<path d="M567.6,245.2 C575,244.5 578,243.5 580.2,242.7 L620.3,228.9 L623.5,251.5 L571.4,259 Z" fill="#aaa"/>
<path d="M571.4,259 L623.5,251.5 L624.1,256.5 L622.8,258.8 L570.2,266.8 L567.6,266.5 Z" fill="url(#gbev3)" stroke-width="0.6"/>
<polygon points="562,246.5 567.6,245.2 570.8,259 567.6,266.5 563.2,260.3" fill="#c9cdd9" stroke-width="0.6"/>
<!-- slot -->
<path d="M632.5,434 L652.5,431.2 L668.7,475 L660,482 L648,480 L645.6,473.7 Z" fill="#aaa"/>
<!-- back tine round end seen in slot -->
<path d="M641.2,458 C645,463 649,465 650,466.2 C655,472 662,479 669.5,480.8 L662,484 L650,483 L645.6,473.7 Z" fill="url(#gbend)" stroke-width="0.7"/>
<line x1="645.6" y1="467" x2="650" y2="466.2" stroke-width="0.6"/>
<!-- right tine tangent line -->
<line x1="667" y1="470.2" x2="682.5" y2="468.3" stroke-width="0.7"/>
</g>

<g stroke="#111" stroke-width="0.9" stroke-linejoin="round" stroke-linecap="round">
<!-- link dark silhouette -->
<path d="M624,188 L633.3,188.9 L646.5,196.4 L677.8,222.8 L689.1,232.8 L697.6,242.5 C702,247 706,250.5 710.2,252.6 C714,254.5 717,255.5 720.2,255.7 C724,255.7 728,254 731.5,254.5 C735,255 738,256 740.3,257.6 C743,260 746,262.5 747.8,265.1 C750,269 752,273 752.8,276.4 C754.5,282 755.5,287 756,292.7 L762.3,346 L768.7,412.5 C770,418 770.3,421 770,425 C769.5,431 768,437 766.2,442.5 C764,449 761,455 757.5,460 L732.5,497.5 L720,500 L716,469 L745,466 L757.5,435 L758.7,413.7 L749.7,346 L744.7,312.8 L734,287.7 L714,284.5 L703,283 L694,274 L685.1,253.2 L670,224.5 Z" fill="#555"/>
<!-- lower part dark gradient (right vertical below tangent) -->
<defs><linearGradient id="glk" gradientUnits="userSpaceOnUse" x1="765" y1="413" x2="750" y2="466"><stop offset="0" stop-color="#565656"/><stop offset="0.35" stop-color="#444"/><stop offset="0.75" stop-color="#1e1e1e"/><stop offset="1" stop-color="#121212"/></linearGradient></defs>
<path d="M758.4,413.8 L769.7,412.3 C770.6,417 771,421 770.9,425.1 C770.5,430.5 769.7,435.5 768.4,440.2 C767.3,444.5 765.8,448.7 764,452.7 C762,457 759.5,461.5 756.5,465.3 L747.1,465.9 C749.3,462.5 751.2,459 752.7,455.2 C754.5,451 755.8,447 756.5,442.7 C757.6,437.5 758.2,432.5 758.4,427.6 Z" fill="url(#glk)"/>
<path d="M747.1,465.9 L756.5,465.3 L732,499.2 L730.2,487.9 Z" fill="#121212"/>
<!-- inner concave band of handle top -->
<path d="M714,283.3 C718,283 722,282.5 725.2,282.7 C729,284 732,286 734,287.7 C737,290.5 739,293.5 740.3,296.5 C742.5,302 744,307 744.7,312.8 L732.1,314 C731,308.5 729.5,303.5 727.8,299 C726,295 724,292 721.5,289 C719,286.5 717,284.5 714,283.3 Z" fill="url(#gbend2)"/>
<!-- vertical light face -->
<path d="M732.1,314 L744.7,312.8 L749.7,346 L758.4,413.8 L758.4,427.6 C758.2,432.5 757.6,437.5 756.5,442.7 C755.8,447 754.5,451 752.7,455.2 C751.2,459 749.3,462.5 747.1,465.9 L730.2,487.9 L712.5,471.2 L716.2,468.7 L732.5,445 C736,438 739,431 740,425 C741.5,417 741.7,408 741.2,400 L735.9,346 Z" fill="#aaa"/>
<!-- top bar light face -->
<path d="M623.9,188.3 C620,188.5 617,189.8 615.1,191.4 C613,194 612.2,197 612.3,199.6 C612.5,203 613.5,206.5 615.1,209 C617,212 619.5,214.3 622.6,215.2 L654.6,242.8 L666.9,255.7 L685.1,253.2 L669.7,224 L626.4,188.9 Z" fill="#aaa"/>
<!-- bend gradient -->
<path d="M666.9,255.7 L685.1,253.2 C687,257 689,261 691.4,265.1 C693,268 695,271 697,273.3 C699,276 701.5,278.5 703.9,280.2 C707,282 710,283 714,283.3 C710,284.2 707,284.6 703.9,284.6 L693.9,284.6 C690,283 687.5,281 685.1,278.9 C682,276 679,272.5 676.3,268.9 Z" fill="url(#gbend)"/>
<line x1="669.7" y1="224" x2="677.8" y2="222.8" stroke-width="0.7"/>
<line x1="697" y1="273.3" x2="747.2" y2="265.1" stroke-width="0.7"/>
<!-- top eye -->
<ellipse cx="622" cy="200.6" rx="6.3" ry="8.1" fill="url(#ghole2)" stroke-width="0.8"/>
<!-- lower eye rim -->
<path d="M693,472.7 C698,470.5 702,470 705,470 C708,470 711,470.8 713.7,471.9 C717,473.5 720,476 721.9,478.7 C725,482 727,485 728.5,489 C730,493 731,498 731.2,503 C731.5,510 730,515 727,519 C724,523 722,524 720,525 C715,528 710,529.5 703.7,530 L690,532 Z" fill="url(#gdk)"/>
<!-- lower eye face (dog-bone) -->
<path d="M650,482.5 C654,483.2 658,483.3 662.5,483 C665,482.5 668,481.5 670,480.6 L680,475.6 C684,474 688,473 692.5,472.7 L697.5,473 C701,474 704,475.5 706.2,477.5 C709,480.5 711,484 712.5,487.5 C714,491 714.5,495 714.4,498.7 C714.3,503 713.8,507 712.5,511.2 C711,516 709.5,519.5 707.5,522.5 C705,526 703,528 700,529.4 C696,530.5 692,530.5 687.5,530 C683,529 679,528 675,526.9 C671,526 667,525.6 662.5,525.6 L652.5,525.6 L645.6,526.2 L640,505 Z" fill="#aaa"/>
<ellipse cx="691.2" cy="502.1" rx="8.1" ry="10.2" fill="url(#ghole2)" stroke-width="0.8"/>
</g>

<defs><clipPath id="clughole"><ellipse cx="521" cy="226.3" rx="9.7" ry="11.6"/></clipPath></defs>
<g stroke="#111" stroke-width="0.9" stroke-linejoin="round" stroke-linecap="round">
<!-- front tine rim (gradient) -->
<path d="M632.5,475.5 L645.6,473.7 C648,478 649.5,483 650,487.5 C651.3,492 651.5,497 651.2,502.5 C651,508 650,513 648,517.5 C646.5,523 644,528 641.2,532.5 C638,537 634,541 628.7,543.7 L622,540 L630,500 Z" fill="url(#gdk)"/>
<line x1="632" y1="475.8" x2="645.6" y2="473.7" stroke-width="0.7"/>
<!-- arm front face -->
<path d="M520.8,299 L573,291.5 L576.2,300 L590,350 L605,400 L620,445 L632.5,475.5 C634,481 635,487 635,493.7 C635.3,499 635,505 634.4,510 C633.5,515 632,520 630,525 C628,530 626,534 623,537.5 L600,540 L550,503.7 L518.7,300 Z" fill="#aaa"/>
<polygon points="507.6,294 559.7,285.9 572.9,288.4 517,294" fill="#3a3a3a" stroke="none"/>
<!-- bevel 2 -->
<path d="M517,294 L572.9,288.4 L573,291.5 L520.8,299 C519,298 517.5,296 517,294 Z" fill="url(#gbev2)" stroke-width="0.6"/>
<!-- lug band -->
<path d="M527.7,192.1 C530,191.8 533,192 535.2,192.8 C539,194 542.5,196.5 545.2,199 C548,202 551,205.5 552.8,209.1 C554.5,212.5 555.8,216.5 556.5,220.4 L547.1,222.3 L535,200 Z" fill="url(#gdk)"/>
<!-- lug face -->
<path d="M495,215.4 C495.5,211 497,208 498.8,205.3 C501,201.5 504,198.5 507.6,196.5 C510.5,194.5 514,193.3 517.6,192.8 C521,192 524.5,191.8 527.7,192.1 C530.5,193 533,194.5 535.2,196.5 C538,199.5 540.8,203.5 542.7,207.8 C544.5,211 545.7,214.5 546.5,217.9 C547.3,221 547.8,224 548.4,230.4 L556.6,280.2 L503.2,287.8 L494.5,231.3 Z" fill="#aaa"/>
<!-- bevel 1 -->
<path d="M503.2,287.8 L556.6,280.2 L559.7,285.9 L507.6,294 C506,293 505,292 504.5,290.9 Z" fill="url(#gbev)" stroke-width="0.6"/>
<!-- lug hole -->
<ellipse cx="521" cy="226.3" rx="9.7" ry="11.6" fill="url(#ghole2)"/>
<g clip-path="url(#clughole)"><ellipse cx="531.5" cy="225.3" rx="9.7" ry="11.6" fill="#aaa" stroke-width="0.8"/></g>
<ellipse cx="521" cy="226.3" rx="9.7" ry="11.6" fill="none"/>
</g>

<g stroke="#111" stroke-width="0.9" stroke-linejoin="round" stroke-linecap="round">
<!-- chamfer strip (plate thickness) -->
<path d="M593,455.5 C606,459 620,472 626,490 C627,497 626.5,503 626.2,507.5 L623.2,537.6 L625.7,544.5 L658.3,617.6 L650,618 L616,538 L620,507 C620,480 606,459 591,455.5 Z" fill="#5353a2"/>
<!-- front face -->
<path d="M550,503.7 C551,495 553.7,485 557.5,477.5 C561,468 567,462 573.7,458.7 C579,456 585,455 590.3,456 C594,457 597,458.3 600.3,460 C604,462.5 607.5,465.5 610.3,468.9 C613.5,472.5 616.5,476.5 618.5,480.2 C620.5,484.5 621.8,489 622.3,494 C622.5,499 622,504 621.6,508.4 L617.6,538.8 L691.4,706.5 L567.5,665.7 L539.5,592.5 Z" fill="#b3b3ff"/>
<!-- hole -->
<ellipse cx="587.5" cy="498" rx="11.2" ry="13.6" fill="#5353a2"/>
<ellipse cx="590" cy="498" rx="8.8" ry="12.6" fill="url(#ghole)" stroke-width="0.6"/>
<path d="M596.3,489.5 C598.3,494 598.6,499 597.3,503.5 C595,499 594.8,494 596.3,489.5 Z" fill="#c8c8d0" stroke-width="0.4"/>
<!-- dome button -->
<path d="M605,685 L605,689.5 C606,693 613,694.3 618.5,694.3 C625,694.3 631,693 631.7,690.5 L631.7,686 Z" fill="url(#gflange2)"/>
<path d="M605,685 C606,681 612,677 618.7,677 C625,677 630,682 631.7,686 C631,689 625,690.3 618.5,690.3 C612,690.3 606,689 605,685 Z" fill="#a4a4f6"/>
</g>

<defs>
<radialGradient id="gball" cx="0.4" cy="0.3" r="0.8"><stop offset="0" stop-color="#fff" stop-opacity="0.7"/><stop offset="0.5" stop-color="#fff" stop-opacity="0"/><stop offset="1" stop-color="#000" stop-opacity="0.15"/></radialGradient>
<linearGradient id="gcube" x1="0" y1="0" x2="1" y2="1"><stop offset="0" stop-color="#9cc4f0"/><stop offset="1" stop-color="#3c78c8"/></linearGradient>
<pattern id="chk" x="633" y="55.5" width="5" height="5" patternUnits="userSpaceOnUse"><rect width="5" height="5" fill="#eee"/><rect width="2.5" height="2.5" fill="#222"/><rect x="2.5" y="2.5" width="2.5" height="2.5" fill="#222"/></pattern>
</defs>
<g id="icons">
<!-- 1 view orientation -->
<polygon points="397,59.5 404,56 411,59.5 404,63" fill="#6aa0dc" stroke="#2c5c9c" stroke-width="0.7"/>
<line x1="404" y1="48" x2="404" y2="59.5" stroke="#111" stroke-width="1"/>
<polygon points="404,46 401.8,49.6 406.2,49.6" fill="#111"/>
<!-- 2 zoom fit -->
<line x1="429.5" y1="57.5" x2="434.5" y2="62" stroke="#3c78c8" stroke-width="2.6" stroke-linecap="round"/>
<circle cx="425.3" cy="53.3" r="5.7" fill="#dcdfe8" stroke="#555" stroke-width="1.3"/>
<circle cx="425.3" cy="53.3" r="2.6" fill="none" stroke="#444" stroke-width="1" stroke-dasharray="2 1.2"/>
<!-- 3 zoom area -->
<line x1="452.5" y1="57.5" x2="457.5" y2="62" stroke="#3c78c8" stroke-width="2.6" stroke-linecap="round"/>
<circle cx="448.3" cy="53.3" r="5.7" fill="#dcdfe8" stroke="#666" stroke-width="1.3"/>
<rect x="442.5" y="47" width="9" height="8" fill="none" stroke="#444" stroke-width="0.9" stroke-dasharray="2 1.3"/>
<!-- 4 previous view -->
<g transform="rotate(42 472 55)"><rect x="463" y="52.3" width="12" height="5" rx="1.5" fill="#5a9be0" stroke="#1f4f94" stroke-width="0.8"/><path d="M474,51 L480,50 C482,53 482,57 480,60 L474,58.8 Z" fill="#9cc8f4" stroke="#1f4f94" stroke-width="0.8"/><ellipse cx="480.5" cy="55" rx="1.8" ry="4.6" fill="#e4eefa" stroke="#1f4f94" stroke-width="0.6"/></g>
<path d="M474.5,50.2 L478.5,47.2 L478.5,49.3 L482,49.3 L482,51.2 L478.5,51.2 L478.5,53.2 Z" fill="#2c78dc"/>
<!-- 5 section view -->
<path d="M488.5,49 C489,46.5 501.5,46.5 502.5,49 L502.5,60.5 C501,63 489.5,63 488.5,60.5 Z" fill="#4a8cd8" stroke="#1f4f94" stroke-width="0.7"/>
<ellipse cx="495.5" cy="49" rx="7" ry="2.2" fill="#8cbcf0" stroke="#1f4f94" stroke-width="0.6"/>
<path d="M489,50 L492.5,51.5 L492.5,62 L489,60.5 Z" fill="#f0d040" stroke="#806000" stroke-width="0.5"/>
<path d="M498.2,51.8 L501.8,50.5 L501.8,60.8 L498.2,62.2 Z" fill="#f0d040" stroke="#806000" stroke-width="0.5"/>
<path d="M492.5,51.5 L498.2,51.8 L498.2,62.2 L492.5,62 Z" fill="#2c5ca4"/>
<!-- 6 view cube -->
<path d="M511.5,51.5 L517,46.5 L528,46.5 L528,57.5 L522.5,62.5 L511.5,62.5 Z" fill="#f4f4f8" stroke="#444" stroke-width="0.9"/>
<path d="M517,46.5 L517,57.5 L528,57.5 M517,57.5 L511.5,62.5" fill="none" stroke="#888" stroke-width="0.6"/>
<rect x="511.5" y="51.5" width="11" height="11" fill="url(#gcube)" stroke="#2c5c9c" stroke-width="0.8"/>
<path d="M522.5,51.5 L528,46.5" stroke="#444" stroke-width="0.8"/>
<path d="M519,49 h4 M521,47.5 v3 M524,56 h3.4 M525.7,54.5 v3" stroke="#e02020" stroke-width="1.1"/>
<polygon points="531.2,55 536.2,55 533.7,57.8" fill="#3a3a60"/>
<!-- 7 display style cube -->
<path d="M544,51.5 L549,47 L560,47 L560,58 L555,62.5 L544,62.5 Z" fill="#f4f4f8" stroke="#444" stroke-width="0.9"/>
<path d="M550.5,51.5 L555,51.5 L560,47 L560,58 L555,62.5 L550.5,62.5 Z" fill="url(#gcube)"/>
<path d="M544,51.5 L555,51.5 L555,62.5 M555,51.5 L560,47" fill="none" stroke="#444" stroke-width="0.8"/>
<polygon points="564,55 569,55 566.5,57.8" fill="#3a3a60"/>
<!-- 8 glasses -->
<ellipse cx="580.5" cy="56.5" rx="3.4" ry="3.8" fill="#c8dcf4" stroke="#555" stroke-width="1"/>
<ellipse cx="588.5" cy="58" rx="3.2" ry="3.6" fill="#c8dcf4" stroke="#555" stroke-width="1"/>
<path d="M578,54 C579,50.5 581,49.5 583,50.5 M587,55 C588.5,52.5 591,52.5 593,54.5 M583.8,57 L585.4,57.4" fill="none" stroke="#555" stroke-width="1"/>
<polygon points="597,55 602,55 599.5,57.8" fill="#3a3a60"/>
<!-- 9 color ball -->
<g><clipPath id="cb9"><circle cx="618" cy="54.5" r="7.8"/></clipPath>
<g clip-path="url(#cb9)"><rect x="610" y="46" width="10" height="9.5" fill="#3c78dc"/><rect x="620" y="46" width="8" height="7" fill="#e44a3a"/><rect x="610" y="55" width="9" height="9" fill="#48b048"/><rect x="619" y="53" width="9" height="11" fill="#f0c030"/><path d="M610,55.5 C614,53.5 617,55 619.5,55.5 C619,51 620,48 621,46" fill="none" stroke="#fff" stroke-width="0.7"/><path d="M619.5,55.5 C622,54.5 625,53 627,52.5 M619.5,55.5 C619,58 619,61 619.5,63" fill="none" stroke="#fff" stroke-width="0.7"/></g>
<circle cx="618" cy="54.5" r="7.8" fill="url(#gball)" stroke="#777" stroke-width="0.5"/></g>
<!-- 10 ball + checker -->
<rect x="633" y="55.5" width="15.6" height="7.2" fill="url(#chk)"/>
<g><clipPath id="cb10"><circle cx="640.8" cy="52.8" r="6"/></clipPath>
<g clip-path="url(#cb10)"><rect x="634" y="46" width="8" height="7.5" fill="#3c78dc"/><rect x="642" y="46" width="6" height="6" fill="#e44a3a"/><rect x="634" y="53.3" width="7.5" height="7" fill="#48b048"/><rect x="641.5" y="52" width="7" height="8" fill="#f0c030"/></g>
<circle cx="640.8" cy="52.8" r="6" fill="url(#gball)" stroke="#777" stroke-width="0.5"/></g>
<polygon points="653,55 658,55 655.5,57.8" fill="#3a3a60"/>
<!-- 11 monitor -->
<rect x="666.5" y="48.5" width="14" height="10.5" fill="#e8eaf0" stroke="#444" stroke-width="1.2"/>
<rect x="668.5" y="50.5" width="10" height="6.5" fill="#9aa0a8"/>
<path d="M671,59.5 L676,59.5 L677.5,62 L669.5,62 Z" fill="#888"/><path d="M668,62.5 h11" stroke="#555" stroke-width="0.8"/>
<path d="M671,52 L676,47 L681.5,46.5 L682.5,50 L678,53.5 L675,51.5 L672.5,54 Z" fill="#e4b880" stroke="#8a6030" stroke-width="0.5"/>
<polygon points="686,55 691,55 688.5,57.8" fill="#3a3a60"/>
</g>


</svg>
<div id="wm">ayc.cn User upload</div>
</body></html>
